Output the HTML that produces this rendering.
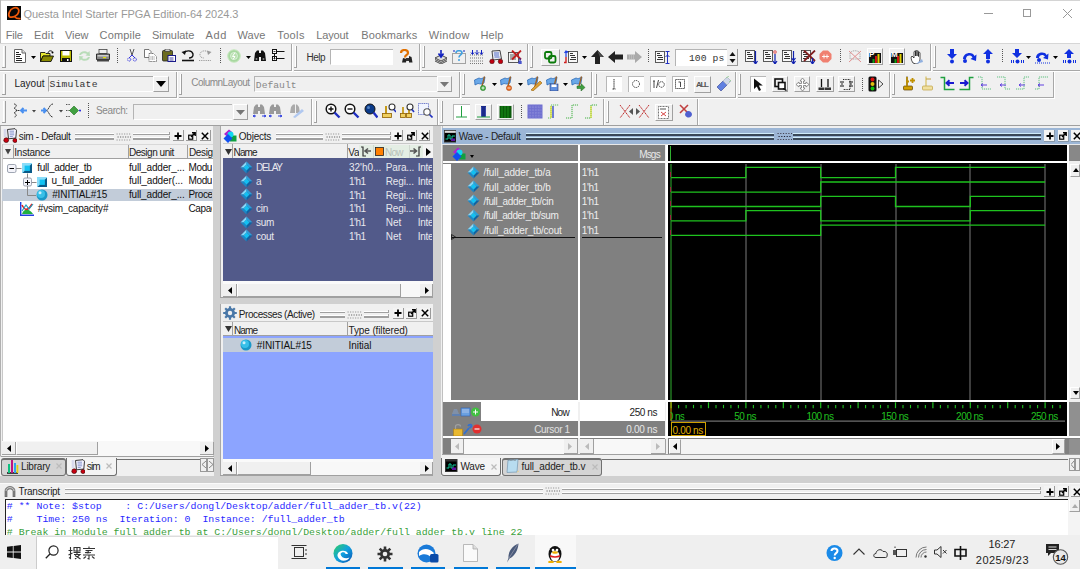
<!DOCTYPE html>
<html><head><meta charset="utf-8"><title>Questa</title>
<style>
html,body{margin:0;padding:0;width:1080px;height:569px;overflow:hidden;background:#f0f0f0;position:relative}
body>div,body>svg{position:absolute;box-sizing:border-box}
body{font-family:"Liberation Sans",sans-serif}
</style></head><body>
<div style="left:0.00px;top:0.00px;width:1080.00px;height:43.00px;background:#fff"></div>
<div style="left:0.00px;top:0.00px;width:1080.00px;height:1.00px;background:#d4d4d4"></div>
<svg style="left:7.00px;top:6.00px;" width="14" height="14" viewBox="0 0 14 14"><rect width="14" height="14" fill="#080808"/><path d="M2.6 10.8 C0.8 9 2.2 3.4 6.6 2 C10.6 0.9 12.6 3.2 11.6 6.2 C10.6 9.6 6 12 2.6 10.8Z" stroke="#f05a0a" stroke-width="1.8" fill="none"/><path d="M7.2 10.2 C8.8 12.2 11.2 13 13.6 12.6" stroke="#f05a0a" stroke-width="1.7" fill="none"/></svg>
<div style="left:23.55px;top:6.62px;height:14px;line-height:14px;font-family:'Liberation Sans',sans-serif;font-size:11px;letter-spacing:-0.052px;color:#999999;white-space:pre;">Questa Intel Starter FPGA Edition-64 2024.3</div>
<div style="left:984.00px;top:13.00px;width:9.00px;height:1.00px;background:#999"></div>
<div style="left:1023.00px;top:9.00px;width:8.00px;height:8.00px;border:1px solid #999;box-sizing:border-box"></div>
<svg style="left:1063.00px;top:9.00px;" width="9" height="9" viewBox="0 0 9 9"><path d="M0 0L9 9M9 0L0 9" stroke="#999" stroke-width="1"/></svg>
<div style="left:5.80px;top:28.27px;height:14px;line-height:14px;font-family:'Liberation Sans',sans-serif;font-size:11px;letter-spacing:-0.195px;color:#777777;white-space:pre;">File</div>
<div style="left:34.05px;top:28.27px;height:14px;line-height:14px;font-family:'Liberation Sans',sans-serif;font-size:11px;letter-spacing:0.144px;color:#777777;white-space:pre;">Edit</div>
<div style="left:65.05px;top:28.27px;height:14px;line-height:14px;font-family:'Liberation Sans',sans-serif;font-size:11px;letter-spacing:-0.085px;color:#777777;white-space:pre;">View</div>
<div style="left:99.55px;top:28.27px;height:14px;line-height:14px;font-family:'Liberation Sans',sans-serif;font-size:11px;letter-spacing:0.173px;color:#777777;white-space:pre;">Compile</div>
<div style="left:152.05px;top:28.27px;height:14px;line-height:14px;font-family:'Liberation Sans',sans-serif;font-size:11px;letter-spacing:-0.057px;color:#777777;white-space:pre;">Simulate</div>
<div style="left:205.55px;top:28.27px;height:14px;line-height:14px;font-family:'Liberation Sans',sans-serif;font-size:11px;letter-spacing:0.661px;color:#777777;white-space:pre;">Add</div>
<div style="left:237.55px;top:28.27px;height:14px;line-height:14px;font-family:'Liberation Sans',sans-serif;font-size:11px;letter-spacing:0.060px;color:#777777;white-space:pre;">Wave</div>
<div style="left:277.25px;top:28.27px;height:14px;line-height:14px;font-family:'Liberation Sans',sans-serif;font-size:11px;letter-spacing:0.378px;color:#777777;white-space:pre;">Tools</div>
<div style="left:316.25px;top:28.27px;height:14px;line-height:14px;font-family:'Liberation Sans',sans-serif;font-size:11px;letter-spacing:-0.166px;color:#777777;white-space:pre;">Layout</div>
<div style="left:361.25px;top:28.27px;height:14px;line-height:14px;font-family:'Liberation Sans',sans-serif;font-size:11px;letter-spacing:0.109px;color:#777777;white-space:pre;">Bookmarks</div>
<div style="left:428.85px;top:28.27px;height:14px;line-height:14px;font-family:'Liberation Sans',sans-serif;font-size:11px;letter-spacing:0.295px;color:#777777;white-space:pre;">Window</div>
<div style="left:480.55px;top:28.27px;height:14px;line-height:14px;font-family:'Liberation Sans',sans-serif;font-size:11px;letter-spacing:0.092px;color:#777777;white-space:pre;">Help</div>
<div style="left:0.00px;top:0.00px;width:1.00px;height:535.00px;background:#b8b8b8"></div>
<div style="left:0.00px;top:43.00px;width:1080.00px;height:83.00px;background:#f0f0f0"></div>
<div style="left:0.00px;top:43.00px;width:1080.00px;height:1.00px;background:#d6d6d6"></div>
<div style="left:290.50px;top:44.00px;width:1.50px;height:27.00px;background:#a8a8a8"></div>
<div style="left:292.00px;top:44.00px;width:1.00px;height:27.00px;background:#ffffff"></div>
<div style="left:0.00px;top:69.70px;width:292.00px;height:1.50px;background:#a8a8a8"></div>
<div style="left:0.00px;top:71.20px;width:293.00px;height:1.00px;background:#ffffff"></div>
<div style="left:3.30px;top:46.00px;width:1.20px;height:22.00px;background:#ffffff"></div>
<div style="left:4.50px;top:46.00px;width:1.30px;height:22.00px;background:#a0a0a0"></div>
<div style="left:2.30px;top:67.00px;width:3.50px;height:1.20px;background:#a0a0a0"></div>
<div style="left:418.50px;top:44.00px;width:1.50px;height:27.00px;background:#a8a8a8"></div>
<div style="left:420.00px;top:44.00px;width:1.00px;height:27.00px;background:#ffffff"></div>
<div style="left:294.00px;top:69.70px;width:126.00px;height:1.50px;background:#a8a8a8"></div>
<div style="left:294.00px;top:71.20px;width:127.00px;height:1.00px;background:#ffffff"></div>
<div style="left:294.80px;top:46.00px;width:1.20px;height:22.00px;background:#ffffff"></div>
<div style="left:296.00px;top:46.00px;width:1.30px;height:22.00px;background:#a0a0a0"></div>
<div style="left:293.80px;top:67.00px;width:3.50px;height:1.20px;background:#a0a0a0"></div>
<div style="left:526.50px;top:44.00px;width:1.50px;height:27.00px;background:#a8a8a8"></div>
<div style="left:528.00px;top:44.00px;width:1.00px;height:27.00px;background:#ffffff"></div>
<div style="left:422.00px;top:69.70px;width:106.00px;height:1.50px;background:#a8a8a8"></div>
<div style="left:422.00px;top:71.20px;width:107.00px;height:1.00px;background:#ffffff"></div>
<div style="left:422.80px;top:46.00px;width:1.20px;height:22.00px;background:#ffffff"></div>
<div style="left:424.00px;top:46.00px;width:1.30px;height:22.00px;background:#a0a0a0"></div>
<div style="left:421.80px;top:67.00px;width:3.50px;height:1.20px;background:#a0a0a0"></div>
<div style="left:929.50px;top:44.00px;width:1.50px;height:27.00px;background:#a8a8a8"></div>
<div style="left:931.00px;top:44.00px;width:1.00px;height:27.00px;background:#ffffff"></div>
<div style="left:530.00px;top:69.70px;width:401.00px;height:1.50px;background:#a8a8a8"></div>
<div style="left:530.00px;top:71.20px;width:402.00px;height:1.00px;background:#ffffff"></div>
<div style="left:530.80px;top:46.00px;width:1.20px;height:22.00px;background:#ffffff"></div>
<div style="left:532.00px;top:46.00px;width:1.30px;height:22.00px;background:#a0a0a0"></div>
<div style="left:529.80px;top:67.00px;width:3.50px;height:1.20px;background:#a0a0a0"></div>
<div style="left:1084.50px;top:44.00px;width:1.50px;height:27.00px;background:#a8a8a8"></div>
<div style="left:1086.00px;top:44.00px;width:1.00px;height:27.00px;background:#ffffff"></div>
<div style="left:933.00px;top:69.70px;width:153.00px;height:1.50px;background:#a8a8a8"></div>
<div style="left:933.00px;top:71.20px;width:154.00px;height:1.00px;background:#ffffff"></div>
<div style="left:933.80px;top:46.00px;width:1.20px;height:22.00px;background:#ffffff"></div>
<div style="left:935.00px;top:46.00px;width:1.30px;height:22.00px;background:#a0a0a0"></div>
<div style="left:932.80px;top:67.00px;width:3.50px;height:1.20px;background:#a0a0a0"></div>
<div style="left:175.50px;top:72.00px;width:1.50px;height:26.00px;background:#a8a8a8"></div>
<div style="left:177.00px;top:72.00px;width:1.00px;height:26.00px;background:#ffffff"></div>
<div style="left:0.00px;top:96.70px;width:177.00px;height:1.50px;background:#a8a8a8"></div>
<div style="left:0.00px;top:98.20px;width:178.00px;height:1.00px;background:#ffffff"></div>
<div style="left:3.30px;top:74.00px;width:1.20px;height:21.00px;background:#ffffff"></div>
<div style="left:4.50px;top:74.00px;width:1.30px;height:21.00px;background:#a0a0a0"></div>
<div style="left:2.30px;top:94.00px;width:3.50px;height:1.20px;background:#a0a0a0"></div>
<div style="left:458.50px;top:72.00px;width:1.50px;height:26.00px;background:#a8a8a8"></div>
<div style="left:460.00px;top:72.00px;width:1.00px;height:26.00px;background:#ffffff"></div>
<div style="left:179.00px;top:96.70px;width:281.00px;height:1.50px;background:#a8a8a8"></div>
<div style="left:179.00px;top:98.20px;width:282.00px;height:1.00px;background:#ffffff"></div>
<div style="left:179.80px;top:74.00px;width:1.20px;height:21.00px;background:#ffffff"></div>
<div style="left:181.00px;top:74.00px;width:1.30px;height:21.00px;background:#a0a0a0"></div>
<div style="left:178.80px;top:94.00px;width:3.50px;height:1.20px;background:#a0a0a0"></div>
<div style="left:590.50px;top:72.00px;width:1.50px;height:26.00px;background:#a8a8a8"></div>
<div style="left:592.00px;top:72.00px;width:1.00px;height:26.00px;background:#ffffff"></div>
<div style="left:462.00px;top:96.70px;width:130.00px;height:1.50px;background:#a8a8a8"></div>
<div style="left:462.00px;top:98.20px;width:131.00px;height:1.00px;background:#ffffff"></div>
<div style="left:462.80px;top:74.00px;width:1.20px;height:21.00px;background:#ffffff"></div>
<div style="left:464.00px;top:74.00px;width:1.30px;height:21.00px;background:#a0a0a0"></div>
<div style="left:461.80px;top:94.00px;width:3.50px;height:1.20px;background:#a0a0a0"></div>
<div style="left:734.50px;top:72.00px;width:1.50px;height:26.00px;background:#a8a8a8"></div>
<div style="left:736.00px;top:72.00px;width:1.00px;height:26.00px;background:#ffffff"></div>
<div style="left:594.00px;top:96.70px;width:142.00px;height:1.50px;background:#a8a8a8"></div>
<div style="left:594.00px;top:98.20px;width:143.00px;height:1.00px;background:#ffffff"></div>
<div style="left:594.80px;top:74.00px;width:1.20px;height:21.00px;background:#ffffff"></div>
<div style="left:596.00px;top:74.00px;width:1.30px;height:21.00px;background:#a0a0a0"></div>
<div style="left:593.80px;top:94.00px;width:3.50px;height:1.20px;background:#a0a0a0"></div>
<div style="left:888.50px;top:72.00px;width:1.50px;height:26.00px;background:#a8a8a8"></div>
<div style="left:890.00px;top:72.00px;width:1.00px;height:26.00px;background:#ffffff"></div>
<div style="left:738.00px;top:96.70px;width:152.00px;height:1.50px;background:#a8a8a8"></div>
<div style="left:738.00px;top:98.20px;width:153.00px;height:1.00px;background:#ffffff"></div>
<div style="left:738.80px;top:74.00px;width:1.20px;height:21.00px;background:#ffffff"></div>
<div style="left:740.00px;top:74.00px;width:1.30px;height:21.00px;background:#a0a0a0"></div>
<div style="left:737.80px;top:94.00px;width:3.50px;height:1.20px;background:#a0a0a0"></div>
<div style="left:1052.50px;top:72.00px;width:1.50px;height:26.00px;background:#a8a8a8"></div>
<div style="left:1054.00px;top:72.00px;width:1.00px;height:26.00px;background:#ffffff"></div>
<div style="left:892.00px;top:96.70px;width:162.00px;height:1.50px;background:#a8a8a8"></div>
<div style="left:892.00px;top:98.20px;width:163.00px;height:1.00px;background:#ffffff"></div>
<div style="left:892.80px;top:74.00px;width:1.20px;height:21.00px;background:#ffffff"></div>
<div style="left:894.00px;top:74.00px;width:1.30px;height:21.00px;background:#a0a0a0"></div>
<div style="left:891.80px;top:94.00px;width:3.50px;height:1.20px;background:#a0a0a0"></div>
<div style="left:310.50px;top:99.00px;width:1.50px;height:27.00px;background:#a8a8a8"></div>
<div style="left:312.00px;top:99.00px;width:1.00px;height:27.00px;background:#ffffff"></div>
<div style="left:0.00px;top:124.70px;width:312.00px;height:1.50px;background:#a8a8a8"></div>
<div style="left:0.00px;top:126.20px;width:313.00px;height:1.00px;background:#ffffff"></div>
<div style="left:3.30px;top:101.00px;width:1.20px;height:22.00px;background:#ffffff"></div>
<div style="left:4.50px;top:101.00px;width:1.30px;height:22.00px;background:#a0a0a0"></div>
<div style="left:2.30px;top:122.00px;width:3.50px;height:1.20px;background:#a0a0a0"></div>
<div style="left:436.50px;top:99.00px;width:1.50px;height:27.00px;background:#a8a8a8"></div>
<div style="left:438.00px;top:99.00px;width:1.00px;height:27.00px;background:#ffffff"></div>
<div style="left:314.00px;top:124.70px;width:124.00px;height:1.50px;background:#a8a8a8"></div>
<div style="left:314.00px;top:126.20px;width:125.00px;height:1.00px;background:#ffffff"></div>
<div style="left:314.80px;top:101.00px;width:1.20px;height:22.00px;background:#ffffff"></div>
<div style="left:316.00px;top:101.00px;width:1.30px;height:22.00px;background:#a0a0a0"></div>
<div style="left:313.80px;top:122.00px;width:3.50px;height:1.20px;background:#a0a0a0"></div>
<div style="left:602.50px;top:99.00px;width:1.50px;height:27.00px;background:#a8a8a8"></div>
<div style="left:604.00px;top:99.00px;width:1.00px;height:27.00px;background:#ffffff"></div>
<div style="left:440.00px;top:124.70px;width:164.00px;height:1.50px;background:#a8a8a8"></div>
<div style="left:440.00px;top:126.20px;width:165.00px;height:1.00px;background:#ffffff"></div>
<div style="left:440.80px;top:101.00px;width:1.20px;height:22.00px;background:#ffffff"></div>
<div style="left:442.00px;top:101.00px;width:1.30px;height:22.00px;background:#a0a0a0"></div>
<div style="left:439.80px;top:122.00px;width:3.50px;height:1.20px;background:#a0a0a0"></div>
<div style="left:696.50px;top:99.00px;width:1.50px;height:27.00px;background:#a8a8a8"></div>
<div style="left:698.00px;top:99.00px;width:1.00px;height:27.00px;background:#ffffff"></div>
<div style="left:606.00px;top:124.70px;width:92.00px;height:1.50px;background:#a8a8a8"></div>
<div style="left:606.00px;top:126.20px;width:93.00px;height:1.00px;background:#ffffff"></div>
<div style="left:606.80px;top:101.00px;width:1.20px;height:22.00px;background:#ffffff"></div>
<div style="left:608.00px;top:101.00px;width:1.30px;height:22.00px;background:#a0a0a0"></div>
<div style="left:605.80px;top:122.00px;width:3.50px;height:1.20px;background:#a0a0a0"></div>
<div style="left:0.00px;top:125.00px;width:1080.00px;height:1.00px;background:#a0a0a0"></div>
<svg style="left:14.00px;top:49.00px;" width="12" height="14" viewBox="0 0 12 14"><path d="M0.5 0.5H8L11.5 4V13.5H0.5Z" fill="#fff" stroke="#666"/><path d="M8 0.5V4H11.5" fill="#ddd" stroke="#666"/><rect x="2" y="3" width="3" height="1" fill="#222"/><rect x="2" y="5" width="5" height="1" fill="#222"/><rect x="2" y="7" width="4" height="1" fill="#222"/><rect x="2" y="9" width="6" height="1" fill="#222"/><rect x="2" y="11" width="6" height="1" fill="#222"/></svg>
<svg style="left:31.00px;top:56.00px;" width="5" height="3" viewBox="0 0 5 3"><path d="M0 0H5L2.5 3Z" fill="#000"/></svg>
<svg style="left:40.00px;top:50.00px;" width="14" height="12" viewBox="0 0 14 12"><path d="M0.5 2.5H5L6 3.5H10V6H3L0.5 11.5Z" fill="#e8e830" stroke="#000" stroke-width="0.8"/><path d="M3 6H13.5L11 11.5H0.5Z" fill="#8a8a00" stroke="#000" stroke-width="0.8"/><path d="M8 3 C8.5 0.5 11 0.2 12.5 1.8" stroke="#000" fill="none" stroke-width="0.9"/><circle cx="12.5" cy="2.5" r="1" fill="#000"/></svg>
<svg style="left:60.00px;top:50.00px;" width="12" height="12" viewBox="0 0 12 12"><rect x="0.5" y="0.5" width="11" height="11" fill="#b8b800" stroke="#111"/><rect x="2.5" y="1" width="7" height="4.5" fill="#fff"/><rect x="2" y="8" width="8" height="4" fill="#111"/><rect x="7" y="9" width="1.5" height="2" fill="#fff"/></svg>
<svg style="left:77.00px;top:49.00px;" width="15" height="14" viewBox="0 0 15 14"><path d="M2 6 C3 2 8 1 11 3.5 L12.5 2 L13 7 L8.5 6.5 L10 5 C8 3.5 5 4 4 6Z" fill="#b8dcb8"/><path d="M13 8 C12 12 7 13 4 10.5 L2.5 12 L2 7 L6.5 7.5 L5 9 C7 10.5 10 10 11 8Z" fill="#b8dcb8"/></svg>
<svg style="left:96.00px;top:49.00px;" width="14" height="13" viewBox="0 0 14 13"><rect x="3" y="0.5" width="8" height="4" fill="#eee" stroke="#444" stroke-width="0.8"/><path d="M0.5 5H13.5V10.5H0.5Z" fill="#888" stroke="#222" stroke-width="0.9"/><rect x="1.5" y="6" width="11" height="1.5" fill="#ccc"/><rect x="7" y="8" width="3" height="1.2" fill="#dd0"/><rect x="1" y="10.5" width="12" height="2" fill="#444"/></svg>
<svg style="left:117.00px;top:48.00px;" width="1" height="15" viewBox="0 0 1 15"><line x1="0.5" y1="0" x2="0.5" y2="15" stroke="#555" stroke-dasharray="1 1"/></svg>
<svg style="left:127.00px;top:49.00px;" width="10" height="13" viewBox="0 0 10 13"><path d="M3 0L5 6L7 0" stroke="#444" fill="none" stroke-width="0.9"/><path d="M5 6 L2 9 M5 6 L8 9" stroke="#3333dd" stroke-width="1"/><circle cx="2.2" cy="10.5" r="1.6" fill="none" stroke="#3333dd" stroke-dasharray="1 0.6"/><circle cx="7.8" cy="10.5" r="1.6" fill="none" stroke="#3333dd" stroke-dasharray="1 0.6"/></svg>
<svg style="left:144.00px;top:49.00px;" width="13" height="13" viewBox="0 0 13 13"><path d="M0.5 0.5H5L7 2.5V8.5H0.5Z" fill="#fff" stroke="#555" stroke-width="0.8"/><path d="M5 4.5H9.5L12.5 7.5V12.5H5Z" fill="#fff" stroke="#555" stroke-width="0.8" stroke-dasharray="1 0.5"/><path d="M6.5 8h4M6.5 10h4" stroke="#555" stroke-width="0.8" stroke-dasharray="1 0.6"/></svg>
<svg style="left:162.00px;top:49.00px;" width="14" height="13" viewBox="0 0 14 13"><rect x="0.5" y="1.5" width="10" height="10.5" rx="1" fill="#6b6b20" stroke="#222" stroke-width="0.8"/><rect x="3" y="0" width="5" height="2.5" fill="#ccc" stroke="#222" stroke-width="0.6"/><rect x="6" y="6.5" width="7.5" height="6" fill="#fff" stroke="#1a1a8a" stroke-width="1"/><path d="M7.5 9h4M7.5 11h4" stroke="#1a1a8a" stroke-width="0.8"/></svg>
<svg style="left:181.00px;top:49.00px;" width="14" height="13" viewBox="0 0 14 13"><path d="M3 4 C5 1 11 1 12 5 C12.5 8 10 9 8 9" stroke="#111" stroke-width="1.4" fill="none"/><path d="M0.5 3L5 1.5L4 6Z" fill="#111"/><path d="M1 11.5H13" stroke="#111" stroke-width="1.6"/></svg>
<svg style="left:198.00px;top:49.00px;" width="14" height="13" viewBox="0 0 14 13"><path d="M11 4 C9 1 3 1 2 5 C1.5 8 4 9 6 9" stroke="#999" stroke-width="1" stroke-dasharray="1 0.8" fill="none"/><path d="M13.5 3L9 1.5L10 6Z" fill="#999"/><path d="M1 11.5H13" stroke="#999" stroke-width="1" stroke-dasharray="1 0.8"/></svg>
<svg style="left:220.00px;top:48.00px;" width="1" height="15" viewBox="0 0 1 15"><line x1="0.5" y1="0" x2="0.5" y2="15" stroke="#555" stroke-dasharray="1 1"/></svg>
<svg style="left:227.00px;top:49.00px;" width="14" height="14" viewBox="0 0 14 14"><circle cx="7" cy="7" r="6.3" fill="#a8d8a0" stroke="#c8e8c0"/><circle cx="7" cy="7" r="3.5" fill="#b8e0b0" stroke="#fff" stroke-width="0.5"/><path d="M8 3.5L5.5 7.5H8L6 10.5" stroke="#fff" stroke-width="1" fill="none"/></svg>
<svg style="left:246.00px;top:56.00px;" width="5" height="3" viewBox="0 0 5 3"><path d="M0 0H5L2.5 3Z" fill="#000"/></svg>
<svg style="left:253.00px;top:49.00px;" width="14" height="13" viewBox="0 0 14 13"><path d="M1 12 L2 4 L4 1.5 H6 V12Z M13 12 L12 4 L10 1.5 H8 V12Z" fill="#111"/><rect x="5.5" y="4" width="3" height="4" fill="#111"/><circle cx="3.5" cy="10" r="1" fill="#888"/><circle cx="10.5" cy="10" r="1" fill="#888"/></svg>
<svg style="left:272.00px;top:49.00px;" width="13" height="13" viewBox="0 0 13 13"><rect x="0.5" y="0.5" width="4" height="4" fill="#fff" stroke="#111"/><rect x="0.5" y="7.5" width="4" height="4" fill="#fff" stroke="#111"/><path d="M2.5 4.5V9.5M4.5 2.5H12.5M4.5 9.5H12.5" stroke="#111" stroke-width="1"/><path d="M1.5 2.5h2M1.5 9.5h2M2.5 8.5v2" stroke="#111" stroke-width="0.8"/></svg>
<div style="left:306.55px;top:51.07px;height:13px;line-height:13px;font-family:'Liberation Sans',sans-serif;font-size:10px;letter-spacing:-0.526px;color:#333;white-space:pre;">Help</div>
<div style="left:330.00px;top:48.70px;width:63.00px;height:16.00px;background:#fff;border-top:1px solid #b4b4b4;border-left:1px solid #b4b4b4;border-bottom:1px solid #fff;box-sizing:border-box"></div>
<svg style="left:399.00px;top:49.00px;" width="14" height="14" viewBox="0 0 14 14"><path d="M2 4 C2 0 9 0 9 4 C9 6 6 6 6 8.5" stroke="#e07000" stroke-width="2.2" fill="none"/><circle cx="6" cy="11" r="1.2" fill="#e07000"/><path d="M4 9 L3 13.5 H7 L7.5 10Z M13.5 13.5 L12.5 8 L10 7 V13.5Z" fill="#222"/><rect x="7" y="9" width="3" height="3" fill="#333"/></svg>
<svg style="left:434.00px;top:50.00px;" width="14" height="14" viewBox="0 0 14 14"><path d="M1 8 L7 5 L13 8 L7 11Z" fill="#ddd" stroke="#222" stroke-width="0.8"/><path d="M1 9.5 L7 12.5 L13 9.5 M1 11 L7 14 L13 11" stroke="#222" stroke-width="0.8" fill="none"/><path d="M7 0V6M4.5 3.5L7 7L9.5 3.5" stroke="#1020c0" stroke-width="1.6" fill="none"/></svg>
<svg style="left:452.00px;top:50.00px;" width="14" height="14" viewBox="0 0 14 14"><rect x="0.5" y="3.5" width="13" height="10" fill="none" stroke="#555" stroke-dasharray="1 1"/><path d="M4 3 C4 0 10 0 10 3 C10 5 7 5 7 7.5" stroke="#40a0e0" stroke-width="1.6" fill="none"/><circle cx="7" cy="10" r="1" fill="#40a0e0"/><path d="M1 1h2M11 1h2" stroke="#1020c0"/></svg>
<svg style="left:470.00px;top:50.00px;" width="14" height="14" viewBox="0 0 14 14"><path d="M0 5h14M0 8h14M0 11h14M0 13.5h14" stroke="#777" stroke-dasharray="1 1"/><path d="M2.5 0V4M1 2.5L2.5 4.5L4 2.5M7 0V4M5.5 2.5L7 4.5L8.5 2.5M11.5 0V4M10 2.5L11.5 4.5L13 2.5" stroke="#1020c0" fill="none"/></svg>
<svg style="left:489.00px;top:50.00px;" width="14" height="14" viewBox="0 0 14 14"><path d="M3 1 L11 0.5 L12.5 9 L4 10Z" fill="#e8e8f0" stroke="#333" stroke-width="0.9"/><path d="M5 3h5M5 5h5M5.5 7h5" stroke="#3050c0" stroke-width="0.8"/><circle cx="3" cy="11.5" r="2.3" fill="#c00010" stroke="#300" stroke-width="0.5"/><circle cx="11.5" cy="11.5" r="2.3" fill="#c00010" stroke="#300" stroke-width="0.5"/></svg>
<svg style="left:508.00px;top:50.00px;" width="15" height="14" viewBox="0 0 15 14"><rect x="0.5" y="2.5" width="10" height="10" fill="#f4f4f4" stroke="#333" stroke-width="0.8"/><path d="M2 5h6M2 7h6M2 9h6" stroke="#333" stroke-width="0.8"/><path d="M4 0.5L13 9.5M13 0.5L4 9.5" stroke="#c02020" stroke-width="1.8"/><path d="M12 8V14M10 12h4M10 14h4" stroke="#1020c0"/></svg>
<div style="left:541.00px;top:49.00px;width:19.00px;height:17.00px;background:#f0f0f0;border-right:1px solid #a0a0a0;border-bottom:1px solid #a0a0a0;border-left:1px solid #fff;border-top:1px solid #fff;box-sizing:border-box"></div>
<svg style="left:544.00px;top:51.00px;" width="13" height="13" viewBox="0 0 13 13"><rect x="1" y="1" width="6.5" height="6.5" rx="1.5" fill="none" stroke="#0a7a0a" stroke-width="1.8"/><rect x="5" y="5" width="6.5" height="6.5" rx="1.5" fill="none" stroke="#0a7a0a" stroke-width="1.8"/></svg>
<svg style="left:563.00px;top:50.00px;" width="15" height="14" viewBox="0 0 15 14"><rect x="5.5" y="1.5" width="9" height="11" fill="#f8f8f8" stroke="#333" stroke-width="0.8"/><rect x="7" y="3" width="3" height="1" fill="#333"/><rect x="7" y="5" width="5" height="1" fill="#333"/><rect x="8" y="7" width="5" height="1" fill="#333"/><rect x="7" y="9" width="6" height="1" fill="#333"/><path d="M3 7 V1.5 H5M1.5 3L3 1L4.5 3" stroke="#2040e0" stroke-width="1.2" fill="none"/><path d="M3 7V12.5H1" stroke="#d02020" stroke-width="1.4" fill="none"/></svg>
<svg style="left:582.00px;top:56.00px;" width="5" height="3" viewBox="0 0 5 3"><path d="M0 0H5L2.5 3Z" fill="#000"/></svg>
<svg style="left:591.00px;top:50.00px;" width="13" height="14" viewBox="0 0 13 14"><path d="M6.5 0L13 7H9V14H4V7H0Z" fill="#222"/><path d="M6.5 1L12 7H9" fill="#555"/></svg>
<svg style="left:608.00px;top:51.00px;" width="16" height="12" viewBox="0 0 16 12"><path d="M0 6L7 0V3.5H15V8.5H7V12Z" fill="#222"/></svg>
<svg style="left:627.00px;top:51.00px;" width="15" height="12" viewBox="0 0 15 12"><path d="M15 6L8 0V3.5H0V8.5H8V12Z" fill="#aaa"/><path d="M2 5h6M2 7h6" stroke="#ccc" stroke-dasharray="1 1"/></svg>
<svg style="left:648.00px;top:49.00px;" width="1" height="14" viewBox="0 0 1 14"><line x1="0.5" y1="0" x2="0.5" y2="14" stroke="#555" stroke-dasharray="1 1"/></svg>
<svg style="left:655.00px;top:50.00px;" width="15" height="14" viewBox="0 0 15 14"><rect x="0.5" y="1.5" width="9" height="11" fill="#f8f8f8" stroke="#333" stroke-width="0.8"/><rect x="2" y="3" width="3" height="1" fill="#333"/><rect x="2" y="5" width="5" height="1" fill="#333"/><rect x="3" y="7" width="5" height="1" fill="#333"/><rect x="2" y="9" width="6" height="1" fill="#333"/><path d="M12.5 1V13.5M10.5 1.5h4M10.5 13.5h4M10.5 7L12.5 5L14.5 7" stroke="#2030c0" fill="none"/></svg>
<div style="left:675.00px;top:49.00px;width:52.00px;height:17.00px;background:#fff;border-top:1px solid #b4b4b4;border-left:1px solid #b4b4b4;box-sizing:border-box"></div>
<div style="left:688.95px;top:51.71px;height:13px;line-height:13px;font-family:'Liberation Mono',sans-serif;font-size:9.7px;letter-spacing:0.102px;color:#333;white-space:pre;">100 ps</div>
<div style="left:727.00px;top:49.00px;width:11.00px;height:17.00px;background:#f0f0f0;border-right:1px solid #999;border-bottom:1px solid #999;box-sizing:border-box"></div>
<svg style="left:728.00px;top:51.00px;" width="9" height="13" viewBox="0 0 9 13"><path d="M1.5 5L4.5 1L7.5 5Z M1.5 8L4.5 12L7.5 8Z" fill="#111"/></svg>
<svg style="left:745.00px;top:49.00px;" width="14" height="14" viewBox="0 0 14 14"><rect x="0.5" y="1.5" width="9" height="11" fill="#f8f8f8" stroke="#333" stroke-width="0.8"/><rect x="2" y="3" width="3" height="1" fill="#333"/><rect x="2" y="5" width="5" height="1" fill="#333"/><rect x="3" y="7" width="5" height="1" fill="#333"/><rect x="2" y="9" width="6" height="1" fill="#333"/></svg>
<svg style="left:763.00px;top:49.00px;" width="14" height="14" viewBox="0 0 14 14"><rect x="0.5" y="1.5" width="9" height="11" fill="#f8f8f8" stroke="#333" stroke-width="0.8"/><rect x="2" y="3" width="3" height="1" fill="#333"/><rect x="2" y="5" width="5" height="1" fill="#333"/><rect x="3" y="7" width="5" height="1" fill="#333"/><rect x="2" y="9" width="6" height="1" fill="#333"/></svg>
<svg style="left:782.00px;top:49.00px;" width="14" height="14" viewBox="0 0 14 14"><rect x="0.5" y="1.5" width="9" height="11" fill="#f8f8f8" stroke="#333" stroke-width="0.8"/><rect x="2" y="3" width="3" height="1" fill="#333"/><rect x="2" y="5" width="5" height="1" fill="#333"/><rect x="3" y="7" width="5" height="1" fill="#333"/><rect x="2" y="9" width="6" height="1" fill="#333"/></svg>
<svg style="left:801.00px;top:49.00px;" width="14" height="14" viewBox="0 0 14 14"><rect x="0.5" y="1.5" width="9" height="11" fill="#f8f8f8" stroke="#333" stroke-width="0.8"/><rect x="2" y="3" width="3" height="1" fill="#333"/><rect x="2" y="5" width="5" height="1" fill="#333"/><rect x="3" y="7" width="5" height="1" fill="#333"/><rect x="2" y="9" width="6" height="1" fill="#333"/></svg>
<svg style="left:753.00px;top:50.00px;" width="6" height="14" viewBox="0 0 6 14"><path d="M2.5 1V13M0.5 11L2.5 14L4.5 11" stroke="#1020b0" stroke-width="1.2" fill="none"/></svg>
<svg style="left:772.00px;top:50.00px;" width="6" height="14" viewBox="0 0 6 14"><circle cx="3" cy="2" r="1.5" fill="#f4a0a0" stroke="#d04040" stroke-width="0.5"/><path d="M3 4V13M1 11L3 14L5 11" stroke="#1020b0" stroke-width="1.2" fill="none"/></svg>
<svg style="left:790.00px;top:50.00px;" width="7" height="14" viewBox="0 0 7 14"><path d="M3.5 1V13M1.5 8L3.5 10.5L5.5 8M1.5 11L3.5 14L5.5 11" stroke="#1020b0" stroke-width="1.2" fill="none"/></svg>
<svg style="left:803.00px;top:50.00px;" width="13" height="14" viewBox="0 0 13 14"><path d="M1 0.5L12 11M12 0.5L1 11" stroke="#802020" stroke-width="1.8"/><path d="M9.5 8V13M7.5 11L9.5 14L11.5 11" stroke="#1020b0" stroke-width="1.2" fill="none"/></svg>
<svg style="left:819.00px;top:50.00px;" width="13" height="13" viewBox="0 0 13 13"><path d="M4 0.5H9L12.5 4V9L9 12.5H4L0.5 9V4Z" fill="#f08070"/><path d="M3 6.5h7M5 4.5v4M8 4.5v4" stroke="#fff" stroke-width="0.9"/></svg>
<svg style="left:840.00px;top:49.00px;" width="1" height="14" viewBox="0 0 1 14"><line x1="0.5" y1="0" x2="0.5" y2="14" stroke="#555" stroke-dasharray="1 1"/></svg>
<svg style="left:848.00px;top:50.00px;" width="14" height="13" viewBox="0 0 14 13"><path d="M2 3 C4 0 10 0 12 3 V9 H2Z" fill="none" stroke="#999" stroke-width="0.9" stroke-dasharray="1 0.8"/><path d="M1 1L13 12M13 1L1 12" stroke="#e09090" stroke-width="1"/></svg>
<div style="left:867.00px;top:48.00px;width:16.00px;height:17.00px;background:#f0f0f0;border-right:1px solid #a0a0a0;border-bottom:1px solid #a0a0a0;border-left:1px solid #fff;border-top:1px solid #fff;box-sizing:border-box"></div>
<svg style="left:869.00px;top:50.00px;" width="13" height="13" viewBox="0 0 13 13"><rect x="0" y="3" width="12" height="10" fill="#111"/><rect x="6" y="6" width="2" height="7" fill="#d01010"/><rect x="8.5" y="4" width="2" height="9" fill="#e0d000"/><rect x="3.5" y="9" width="2" height="4" fill="#10a010"/><text x="0" y="7" font-family="Liberation Sans" font-weight="bold" font-size="8" fill="#fff">P</text></svg>
<div style="left:889.00px;top:48.00px;width:16.00px;height:17.00px;background:#f0f0f0;border-right:1px solid #a0a0a0;border-bottom:1px solid #a0a0a0;border-left:1px solid #fff;border-top:1px solid #fff;box-sizing:border-box"></div>
<svg style="left:891.00px;top:50.00px;" width="13" height="13" viewBox="0 0 13 13"><rect x="0" y="3" width="12" height="10" fill="#111"/><rect x="6" y="6" width="2" height="7" fill="#d01010"/><rect x="8.5" y="4" width="2" height="9" fill="#e0d000"/><rect x="3.5" y="9" width="2" height="4" fill="#10a010"/><text x="0" y="7" font-family="Liberation Sans" font-weight="bold" font-size="8" fill="#fff">M</text></svg>
<svg style="left:910.00px;top:50.00px;" width="14" height="14" viewBox="0 0 14 14"><path d="M3 13 C1 10 0.5 7 2 6 L4 8 V2 C4 1 5.5 1 5.5 2 V6 V1 C5.5 0 7 0 7 1 V6 V1.5 C7 0.5 8.5 0.5 8.5 1.5 V6.5 V3 C8.5 2 10 2 10 3 V9 C10 12 8 14 6 14Z" fill="#fff" stroke="#222" stroke-width="0.8"/><path d="M6 14 L12 9 L13 12 Z" fill="#90b0e0"/></svg>
<svg style="left:947.00px;top:49.00px;" width="10" height="15" viewBox="0 0 10 15"><path d="M3 0H7V5H10L5 10L0 5H3Z" fill="#1030e0"/><circle cx="5" cy="12.5" r="2" fill="#1030e0"/></svg>
<svg style="left:962.00px;top:50.00px;" width="15" height="13" viewBox="0 0 15 13"><path d="M1 9 C1 2 11 1 12.5 6 L14.5 4.5 L14 11 L8.5 9 L10.5 7.5 C9 4.5 4 5 4 9Z" fill="#1030e0"/><circle cx="3" cy="11" r="2" fill="#1030e0"/></svg>
<svg style="left:983.00px;top:49.00px;" width="10" height="15" viewBox="0 0 10 15"><path d="M3 10H7V5H10L5 0L0 5H3Z" fill="#1030e0"/><circle cx="5" cy="12.5" r="2" fill="#1030e0"/></svg>
<svg style="left:1002.00px;top:49.00px;" width="1" height="14" viewBox="0 0 1 14"><line x1="0.5" y1="0" x2="0.5" y2="14" stroke="#555" stroke-dasharray="1 1"/></svg>
<svg style="left:1011.00px;top:49.00px;" width="13" height="15" viewBox="0 0 13 15"><path d="M4 0H8V4H11L6 9L1 4H4Z" fill="#1030e0"/><circle cx="6.5" cy="12.5" r="2" fill="#1030e0"/><path d="M0.5 11v3M2.5 11v3M10.5 11v3M12.5 11v3" stroke="#1030e0"/></svg>
<svg style="left:1026.00px;top:56.00px;" width="5" height="3" viewBox="0 0 5 3"><path d="M0 0H5L2.5 3Z" fill="#000"/></svg>
<svg style="left:1035.00px;top:50.00px;" width="15" height="14" viewBox="0 0 15 14"><path d="M1 8 C1 2 10 1 11.5 5 L13.5 3.5 L13 9.5 L8 8 L10 6.5 C8.5 4 4 4.5 4 8Z" fill="#1030e0"/><circle cx="4" cy="10" r="2" fill="#1030e0"/><path d="M0 13h15" stroke="#1030e0" stroke-dasharray="1 1"/></svg>
<svg style="left:1053.00px;top:56.00px;" width="5" height="3" viewBox="0 0 5 3"><path d="M0 0H5L2.5 3Z" fill="#000"/></svg>
<svg style="left:1063.00px;top:49.00px;" width="13" height="15" viewBox="0 0 13 15"><path d="M4 9H8V5H11L6 0L1 5H4Z" fill="#1030e0"/><circle cx="6.5" cy="12.5" r="2" fill="#1030e0"/><path d="M0.5 11v3M2.5 11v3M10.5 11v3M12.5 11v3" stroke="#1030e0"/></svg>
<div style="left:14.55px;top:76.52px;height:13px;line-height:13px;font-family:'Liberation Sans',sans-serif;font-size:10px;letter-spacing:-0.026px;color:#222;white-space:pre;">Layout</div>
<div style="left:48.00px;top:76.00px;width:121.00px;height:16.00px;background:#f0f0f0;border-top:1px solid #a8a8a8;border-left:1px solid #a8a8a8;border-bottom:1px solid #fff;box-sizing:border-box"></div>
<div style="left:49.55px;top:78.31px;height:13px;line-height:13px;font-family:'Liberation Mono',sans-serif;font-size:9.7px;letter-spacing:0.198px;color:#333;white-space:pre;">Simulate</div>
<div style="left:153.00px;top:76.00px;width:16.00px;height:16.00px;background:#f0f0f0;border-top:1px solid #fff;border-left:1px solid #fff;border-right:1px solid #a0a0a0;border-bottom:1px solid #a0a0a0;box-sizing:border-box"></div>
<svg style="left:156.00px;top:81.00px;" width="10" height="6" viewBox="0 0 10 6"><path d="M0 0H10L5 6Z" fill="#000"/></svg>
<div style="left:191.25px;top:76.47px;height:13px;line-height:13px;font-family:'Liberation Sans',sans-serif;font-size:10px;letter-spacing:-0.517px;color:#888;white-space:pre;">ColumnLayout</div>
<div style="left:254.00px;top:76.00px;width:183.00px;height:16.00px;background:#f0f0f0;border-top:1px solid #b4b4b4;border-left:1px solid #b4b4b4;border-bottom:1px solid #fff;box-sizing:border-box"></div>
<div style="left:255.85px;top:78.61px;height:13px;line-height:13px;font-family:'Liberation Mono',sans-serif;font-size:9.7px;letter-spacing:0.000px;color:#888;white-space:pre;">Default</div>
<div style="left:437.00px;top:76.00px;width:15.00px;height:16.00px;background:#f0f0f0;border-top:1px solid #fff;border-left:1px solid #fff;border-right:1px solid #a0a0a0;border-bottom:1px solid #a0a0a0;box-sizing:border-box"></div>
<svg style="left:440.00px;top:82.00px;" width="9" height="5" viewBox="0 0 9 5"><path d="M0 0H9L4.5 5Z" fill="#777"/></svg>
<svg style="left:474.00px;top:76.00px;" width="15" height="15" viewBox="0 0 15 15"><path d="M0.5 4 L5 2 C7 3 8 2.5 11 1 L10 7 C8 8.5 6 8 4 7.5 L1 9Z" fill="#6aa8e8" stroke="#2060b0" stroke-width="0.7"/><path d="M10.5 0.5 L7.5 12" stroke="#a06020" stroke-width="1.3"/><circle cx="9" cy="12" r="2.6" fill="#40b040" stroke="#207020" stroke-width="0.5"/><path d="M7.5 12h3M9 10.5v3" stroke="#fff" stroke-width="0.8"/></svg>
<svg style="left:492.00px;top:83.00px;" width="5" height="3" viewBox="0 0 5 3"><path d="M0 0H5L2.5 3Z" fill="#000"/></svg>
<svg style="left:500.00px;top:76.00px;" width="15" height="15" viewBox="0 0 15 15"><path d="M0.5 4 L5 2 C7 3 8 2.5 11 1 L10 7 C8 8.5 6 8 4 7.5 L1 9Z" fill="#6aa8e8" stroke="#2060b0" stroke-width="0.7"/><path d="M10.5 0.5 L7.5 12" stroke="#a06020" stroke-width="1.3"/><circle cx="9" cy="12" r="2.6" fill="#f07020" stroke="#a04010" stroke-width="0.5"/><path d="M7.5 12h3" stroke="#fff" stroke-width="0.8"/></svg>
<svg style="left:518.00px;top:83.00px;" width="5" height="3" viewBox="0 0 5 3"><path d="M0 0H5L2.5 3Z" fill="#000"/></svg>
<svg style="left:527.00px;top:76.00px;" width="15" height="15" viewBox="0 0 15 15"><path d="M0.5 4 L5 2 C7 3 8 2.5 11 1 L10 7 C8 8.5 6 8 4 7.5 L1 9Z" fill="#6aa8e8" stroke="#2060b0" stroke-width="0.7"/><path d="M10.5 0.5 L7.5 12" stroke="#a06020" stroke-width="1.3"/><path d="M4 14 L13 5 L15 7 L6 15Z" fill="#e0a030" stroke="#906010" stroke-width="0.6"/></svg>
<svg style="left:546.00px;top:76.00px;" width="15" height="15" viewBox="0 0 15 15"><path d="M0.5 4 L5 2 C7 3 8 2.5 11 1 L10 7 C8 8.5 6 8 4 7.5 L1 9Z" fill="#6aa8e8" stroke="#2060b0" stroke-width="0.7"/><path d="M10.5 0.5 L7.5 12" stroke="#a06020" stroke-width="1.3"/><rect x="4" y="8" width="8" height="7" fill="#6090e0" stroke="#203070" stroke-width="0.6"/><rect x="5.5" y="8.5" width="5" height="2.5" fill="#fff"/></svg>
<svg style="left:563.00px;top:83.00px;" width="5" height="3" viewBox="0 0 5 3"><path d="M0 0H5L2.5 3Z" fill="#000"/></svg>
<svg style="left:571.00px;top:76.00px;" width="15" height="15" viewBox="0 0 15 15"><path d="M0.5 4 L5 2 C7 3 8 2.5 11 1 L10 7 C8 8.5 6 8 4 7.5 L1 9Z" fill="#6aa8e8" stroke="#2060b0" stroke-width="0.7"/><path d="M10.5 0.5 L7.5 12" stroke="#a06020" stroke-width="1.3"/><path d="M6 10h4V7.5L14 11.5L10 15V12.5H6Z" fill="#40a040" stroke="#206020" stroke-width="0.5"/></svg>
<div style="left:606.00px;top:76.00px;width:16.00px;height:16.00px;background:#fff;border-top:1px solid #b8b8b8;border-left:1px solid #b8b8b8;box-sizing:border-box"></div>
<svg style="left:608.00px;top:78.00px;" width="12" height="12" viewBox="0 0 12 12"><path d="M6 1V11M4.5 11H7.5M6 1" stroke="#333" stroke-width="1" stroke-dasharray="1.5 0.6"/></svg>
<div style="left:628.00px;top:76.00px;width:16.00px;height:16.00px;background:#fff;border-top:1px solid #b8b8b8;border-left:1px solid #b8b8b8;box-sizing:border-box"></div>
<svg style="left:630.00px;top:78.00px;" width="12" height="12" viewBox="0 0 12 12"><circle cx="6" cy="6" r="3.5" fill="none" stroke="#333" stroke-dasharray="1.2 0.8"/></svg>
<div style="left:650.00px;top:76.00px;width:16.00px;height:16.00px;background:#fff;border-top:1px solid #b8b8b8;border-left:1px solid #b8b8b8;box-sizing:border-box"></div>
<svg style="left:652.00px;top:78.00px;" width="13" height="12" viewBox="0 0 13 12"><path d="M2 3V10M1 3H3M6.5 2L4.5 10" stroke="#333" stroke-width="0.9"/><circle cx="9.5" cy="6.5" r="2.8" fill="none" stroke="#333" stroke-dasharray="1.2 0.7"/></svg>
<div style="left:672.00px;top:76.00px;width:16.00px;height:16.00px;background:#fff;border-top:1px solid #b8b8b8;border-left:1px solid #b8b8b8;box-sizing:border-box"></div>
<svg style="left:674.00px;top:78.00px;" width="12" height="12" viewBox="0 0 12 12"><rect x="1.5" y="1.5" width="9" height="9" fill="none" stroke="#333" stroke-dasharray="1.2 0.8"/><path d="M4.5 4H6.5V9" stroke="#333" stroke-width="0.9" fill="none"/></svg>
<div style="left:694.00px;top:76.00px;width:17.00px;height:17.00px;background:#f0f0f0;border-top:1px solid #fff;border-left:1px solid #fff;border-right:1px solid #a0a0a0;border-bottom:1px solid #a0a0a0;box-sizing:border-box"></div>
<div style="left:696.05px;top:80.08px;height:10px;line-height:10px;font-family:'Liberation Sans',sans-serif;font-size:8px;letter-spacing:-1.331px;color:#555;white-space:pre;font-weight:bold;">ALL</div>
<svg style="left:716.00px;top:76.00px;" width="15" height="15" viewBox="0 0 15 15"><path d="M1 11 L7 5 L11 9 L5 15Z" fill="#6080e0" stroke="#304090" stroke-width="0.6"/><path d="M7 5 L11 1 L15 5 L11 9Z" fill="#d0d8e8" stroke="#a0a8c0" stroke-width="0.6"/><path d="M10 2L13 0M13 6L15 4" stroke="#a0d0a0"/></svg>
<div style="left:750.00px;top:76.00px;width:16.00px;height:16.00px;background:#fff;border-top:1px solid #b8b8b8;border-left:1px solid #b8b8b8;box-sizing:border-box"></div>
<svg style="left:753.00px;top:78.00px;" width="11" height="13" viewBox="0 0 11 13"><path d="M1 0.5V11L3.8 8.5L6 13L8 12L5.8 7.6H9.8Z" fill="#111"/></svg>
<div style="left:772.00px;top:76.00px;width:16.00px;height:16.00px;background:#f0f0f0;border-top:1px solid #fff;border-left:1px solid #fff;border-right:1px solid #a0a0a0;border-bottom:1px solid #a0a0a0;box-sizing:border-box"></div>
<svg style="left:774.00px;top:78.00px;" width="13" height="13" viewBox="0 0 13 13"><rect x="1" y="1" width="7.5" height="7.5" fill="none" stroke="#111" stroke-width="1.6"/><rect x="4.5" y="4.5" width="6.5" height="6.5" fill="#fff" stroke="#111" stroke-width="1.6"/><path d="M9 10.5L12.5 12.5" stroke="#111" stroke-width="1.4"/></svg>
<div style="left:794.00px;top:76.00px;width:16.00px;height:16.00px;background:#f0f0f0;border-top:1px solid #fff;border-left:1px solid #fff;border-right:1px solid #a0a0a0;border-bottom:1px solid #a0a0a0;box-sizing:border-box"></div>
<svg style="left:796.00px;top:78.00px;" width="13" height="13" viewBox="0 0 13 13"><path d="M6.5 0L9 3H7.5V5.5H10V4L13 6.5L10 9V7.5H7.5V10H9L6.5 13L4 10H5.5V7.5H3V9L0 6.5L3 4V5.5H5.5V3H4Z" fill="#fff" stroke="#777" stroke-width="0.8"/></svg>
<div style="left:816.00px;top:76.00px;width:18.00px;height:16.00px;background:#f0f0f0;border-top:1px solid #fff;border-left:1px solid #fff;border-right:1px solid #a0a0a0;border-bottom:1px solid #a0a0a0;box-sizing:border-box"></div>
<svg style="left:818.00px;top:78.00px;" width="14" height="13" viewBox="0 0 14 13"><path d="M3.5 1V9M10 1V9" stroke="#111" stroke-width="1.3"/><path d="M0.5 9.5H6.5V12H0.5Z M7 9.5H13V12H7Z" fill="#333"/></svg>
<div style="left:838.00px;top:76.00px;width:17.00px;height:16.00px;background:#f0f0f0;border-top:1px solid #fff;border-left:1px solid #fff;border-right:1px solid #a0a0a0;border-bottom:1px solid #a0a0a0;box-sizing:border-box"></div>
<svg style="left:840.00px;top:79.00px;" width="13" height="11" viewBox="0 0 13 11"><path d="M3 0.5H10V10.5H3" fill="none" stroke="#111" stroke-width="0.9" stroke-dasharray="1 0.7"/><path d="M0 3h4M0 7h4M9 3h4M9 7h4" stroke="#111"/><circle cx="2" cy="5" r="0.8" fill="#111"/><circle cx="11" cy="5" r="0.8" fill="#111"/></svg>
<svg style="left:862.00px;top:78.00px;" width="1" height="14" viewBox="0 0 1 14"><line x1="0.5" y1="0" x2="0.5" y2="14" stroke="#555" stroke-dasharray="1 1"/></svg>
<svg style="left:868.00px;top:76.00px;" width="16" height="16" viewBox="0 0 16 16"><rect x="0.5" y="0.5" width="8" height="15" rx="1.5" fill="#111"/><circle cx="4.5" cy="3.5" r="2" fill="#e01010"/><circle cx="4.5" cy="8" r="2" fill="#e0c010"/><circle cx="4.5" cy="12.5" r="2" fill="#10c010"/><path d="M10.5 4L15 8L10.5 12Z" fill="none" stroke="#333" stroke-width="0.9"/></svg>
<svg style="left:903.00px;top:76.00px;" width="14" height="15" viewBox="0 0 14 15"><path d="M4 0.5V11" stroke="#111" stroke-width="1"/><rect x="0.5" y="10" width="9" height="4" rx="1" fill="#d0a000" stroke="#604000" stroke-width="0.7"/><path d="M3 5.5H6M9.5 2V7M7 4.5H12" stroke="#c09000" stroke-width="1.8"/><path d="M4 1v9" stroke="#c09000" stroke-width="1.6"/></svg>
<svg style="left:922.00px;top:76.00px;" width="13" height="15" viewBox="0 0 13 15"><path d="M4 0.5V10" stroke="#d8c060" stroke-width="1.2"/><rect x="0.5" y="10" width="10" height="4" rx="1" fill="#f0e0a0" stroke="#c0a040" stroke-width="0.7"/><path d="M4 3H9" stroke="#c0a040" stroke-width="1"/></svg>
<svg style="left:940.00px;top:76.00px;" width="15" height="15" viewBox="0 0 15 15"><path d="M0.5 1.5H4.5V13.5H14.5" stroke="#20a040" stroke-width="1.5" fill="none"/><path d="M7 7H14M9.5 4.2L6.5 7L9.5 9.8" stroke="#1a1ad0" stroke-width="2" fill="none"/></svg>
<svg style="left:958.50px;top:76.00px;" width="15" height="15" viewBox="0 0 15 15"><path d="M0.5 13.5H10.5V1.5H14.5" stroke="#20a040" stroke-width="1.5" fill="none"/><path d="M1 7H8M5.5 4.2L8.5 7L5.5 9.8" stroke="#1a1ad0" stroke-width="2" fill="none"/></svg>
<svg style="left:977.00px;top:76.00px;" width="15" height="15" viewBox="0 0 15 15"><path d="M1 1H5V13H14" stroke="#60c080" stroke-width="1" stroke-dasharray="1.2 0.8" fill="none"/><path d="M4 9H10M6 7.5L4 9L6 10.5" stroke="#6040e0" stroke-width="1" fill="none"/></svg>
<svg style="left:996.00px;top:76.00px;" width="15" height="15" viewBox="0 0 15 15"><path d="M1 1H9V13H14" stroke="#60c080" stroke-width="1" stroke-dasharray="1.2 0.8" fill="none"/><path d="M4 9H10M6 7.5L4 9L6 10.5" stroke="#6040e0" stroke-width="1" fill="none"/></svg>
<svg style="left:1015.00px;top:76.00px;" width="15" height="15" viewBox="0 0 15 15"><path d="M14 1H9V13H1" stroke="#60c080" stroke-width="1" stroke-dasharray="1.2 0.8" fill="none"/><path d="M4 9H10M6 7.5L4 9L6 10.5" stroke="#6040e0" stroke-width="1" fill="none"/></svg>
<svg style="left:1034.00px;top:76.00px;" width="15" height="15" viewBox="0 0 15 15"><path d="M14 1H5V13H1" stroke="#60c080" stroke-width="1" stroke-dasharray="1.2 0.8" fill="none"/><path d="M4 9H10M6 7.5L4 9L6 10.5" stroke="#6040e0" stroke-width="1" fill="none"/></svg>
<svg style="left:13.00px;top:103.00px;" width="15" height="15" viewBox="0 0 15 15"><path d="M1 1 C4 1 4 4 1 5 C4 6 4 9 1 10 C4 11 4 14 1 14 M3 7.5H7" stroke="#333" stroke-width="1" fill="none" stroke-dasharray="1.5 0.5"/><path d="M8 7.5H14M10.5 5L8 7.5L10.5 10" stroke="#4a90f0" stroke-width="2" fill="none"/></svg>
<svg style="left:32.00px;top:110.00px;" width="4" height="2.5" viewBox="0 0 4 2.5"><path d="M0 0H4L2 2.5Z" fill="#444"/></svg>
<svg style="left:40.00px;top:103.00px;" width="14" height="15" viewBox="0 0 14 15"><path d="M1 7.5H6M3.5 5L6 7.5L3.5 10" stroke="#4a90f0" stroke-width="2" fill="none"/><path d="M13 1 C10 1 10 4 7 7.5 C10 11 10 14 13 14" stroke="#333" stroke-width="1" fill="none" stroke-dasharray="1.5 0.5"/></svg>
<svg style="left:58.50px;top:110.00px;" width="4" height="2.5" viewBox="0 0 4 2.5"><path d="M0 0H4L2 2.5Z" fill="#444"/></svg>
<svg style="left:66.00px;top:103.00px;" width="15" height="15" viewBox="0 0 15 15"><path d="M0 1.5h4M0 7.5h4M0 13.5h4" stroke="#555" stroke-dasharray="1 0.6"/><path d="M8 3L12.5 7.5L8 12L3.5 7.5Z" fill="#40a040" stroke="#207020" stroke-width="0.6"/><circle cx="14" cy="7.5" r="1.1" fill="#3030e0"/></svg>
<svg style="left:88.00px;top:103.00px;" width="1" height="16" viewBox="0 0 1 16"><line x1="0.5" y1="0" x2="0.5" y2="16" stroke="#555" stroke-dasharray="1 1"/></svg>
<div style="left:96.05px;top:104.47px;height:13px;line-height:13px;font-family:'Liberation Sans',sans-serif;font-size:10px;letter-spacing:-0.395px;color:#888;white-space:pre;">Search:</div>
<div style="left:133.00px;top:104.00px;width:99.00px;height:16.00px;background:#f0f0f0;border-top:1px solid #b4b4b4;border-left:1px solid #b4b4b4;border-bottom:1px solid #fff;box-sizing:border-box"></div>
<div style="left:233.00px;top:104.00px;width:15.00px;height:16.00px;background:#f0f0f0;border-top:1px solid #fff;border-left:1px solid #fff;border-right:1px solid #a0a0a0;border-bottom:1px solid #a0a0a0;box-sizing:border-box"></div>
<svg style="left:236.00px;top:110.00px;" width="9" height="5" viewBox="0 0 9 5"><path d="M0 0H9L4.5 5Z" fill="#777"/></svg>
<svg style="left:252.00px;top:103.00px;" width="15" height="15" viewBox="0 0 15 15"><path d="M1 11 L2 4 L4 1.5 H6 V11Z M13 11 L12 4 L10 1.5 H8 V11Z" fill="#999"/><rect x="5.5" y="4" width="3" height="4" fill="#999"/><path d="M1 13 L4 13 M3 12 L1 13 L3 14 M10 13 L14 13 M12 12 L14 13 L12 14" stroke="#3040e0" fill="none"/></svg>
<svg style="left:268.00px;top:103.00px;" width="15" height="15" viewBox="0 0 15 15"><path d="M1 11 L2 4 L4 1.5 H6 V11Z M13 11 L12 4 L10 1.5 H8 V11Z" fill="#999"/><rect x="5.5" y="4" width="3" height="4" fill="#999"/><path d="M1 13 L4 13 M3 12 L1 13 L3 14 M10 13 L14 13 M12 12 L14 13 L12 14" stroke="#3040e0" fill="none"/></svg>
<svg style="left:289.00px;top:103.00px;" width="15" height="15" viewBox="0 0 15 15"><path d="M1 10 L2 4 L4 1.5 H6 V10Z M11 10 L10 4 L8 1.5 H7 V10Z" fill="#aaa"/><path d="M4 14 L13 6 L15 8 L6 15Z" fill="#b0c8f0"/></svg>
<svg style="left:325.00px;top:103.00px;" width="16" height="16" viewBox="0 0 16 16"><circle cx="6" cy="6" r="4.8" fill="#fff" stroke="#111" stroke-width="1.5"/><path d="M3.5 6h5M6 3.5v5" stroke="#111" stroke-width="1.4"/><path d="M9.5 9.5L14.5 14.5" stroke="#2030c0" stroke-width="2.4"/></svg>
<svg style="left:344.00px;top:103.00px;" width="16" height="16" viewBox="0 0 16 16"><circle cx="6" cy="6" r="4.8" fill="#fff" stroke="#111" stroke-width="1.5"/><path d="M3.5 6h5" stroke="#111" stroke-width="1.4"/><path d="M9.5 9.5L14.5 14.5" stroke="#2030c0" stroke-width="2.4"/></svg>
<svg style="left:364.00px;top:103.00px;" width="14" height="16" viewBox="0 0 14 16"><circle cx="6" cy="6" r="5" fill="#0a3a8a" stroke="#111" stroke-width="1"/><circle cx="4.5" cy="4.5" r="1.5" fill="#5080c0"/><path d="M9.5 9.5L13.5 14.5" stroke="#2030c0" stroke-width="2.4"/></svg>
<svg style="left:382.00px;top:103.00px;" width="14" height="15" viewBox="0 0 14 15"><path d="M4 3V11" stroke="#c09000" stroke-width="1.8"/><rect x="0.5" y="10.5" width="9" height="4" fill="#f0d060" stroke="#906000" stroke-width="0.8"/><circle cx="10" cy="4" r="3" fill="#fff" stroke="#333" stroke-width="1.1"/><path d="M12 6.5L14 9" stroke="#2030c0" stroke-width="1.6"/></svg>
<svg style="left:400.00px;top:103.00px;" width="15" height="15" viewBox="0 0 15 15"><path d="M3 4V11M9 4V11" stroke="#c09000" stroke-width="1.6"/><rect x="0.5" y="10.5" width="5" height="4" fill="#f0d060" stroke="#906000" stroke-width="0.8"/><rect x="6.5" y="10.5" width="5" height="4" fill="#f0d060" stroke="#906000" stroke-width="0.8"/><circle cx="10" cy="4" r="3" fill="#fff" stroke="#333" stroke-width="1.1"/><path d="M12 6.5L14 9" stroke="#2030c0" stroke-width="1.6"/></svg>
<svg style="left:418.00px;top:103.00px;" width="15" height="15" viewBox="0 0 15 15"><rect x="0.5" y="0.5" width="10" height="11" fill="#f0f4ff" stroke="#5060c0" stroke-width="0.8" stroke-dasharray="1.2 0.6"/><circle cx="9" cy="9" r="3.2" fill="#fff" stroke="#555" stroke-width="1.1"/><path d="M11.5 11.5L14.5 14.5" stroke="#2030c0" stroke-width="1.6"/></svg>
<div style="left:453.00px;top:104.00px;width:17.00px;height:16.00px;background:#fff;border-top:1px solid #b8b8b8;border-left:1px solid #b8b8b8;box-sizing:border-box"></div>
<svg style="left:455.00px;top:106.00px;" width="13" height="12" viewBox="0 0 13 12"><path d="M6.5 0V11M1 11H12" stroke="#20a040" stroke-width="1"/></svg>
<div style="left:475.00px;top:104.00px;width:17.00px;height:16.00px;background:#f0f0f0;border-top:1px solid #fff;border-left:1px solid #fff;border-right:1px solid #a0a0a0;border-bottom:1px solid #a0a0a0;box-sizing:border-box"></div>
<svg style="left:477.00px;top:106.00px;" width="13" height="12" viewBox="0 0 13 12"><rect x="4" y="0" width="5" height="11" fill="#1a2a8a"/><path d="M0 11H13" stroke="#20a040"/><path d="M4.5 1v10M8.5 1v10" stroke="#5060c0" stroke-width="0.6"/></svg>
<div style="left:497.00px;top:104.00px;width:17.00px;height:16.00px;background:#f0f0f0;border-top:1px solid #fff;border-left:1px solid #fff;border-right:1px solid #a0a0a0;border-bottom:1px solid #a0a0a0;box-sizing:border-box"></div>
<svg style="left:499.00px;top:106.00px;" width="13" height="12" viewBox="0 0 13 12"><rect x="0.5" y="0" width="12" height="12" fill="#0a5a0a"/><path d="M3 0v12M6 0v12M9 0v12" stroke="#20a020" stroke-width="0.8"/></svg>
<svg style="left:521.00px;top:105.00px;" width="1" height="14" viewBox="0 0 1 14"><line x1="0.5" y1="0" x2="0.5" y2="14" stroke="#555" stroke-dasharray="1 1"/></svg>
<svg style="left:527.00px;top:104.00px;" width="16" height="15" viewBox="0 0 16 15"><rect x="0.5" y="0.5" width="15" height="14" fill="#7070d0"/><path d="M0 3h16M0 6h16M0 9h16M0 12h16M3 0v15M6 0v15M9 0v15M12 0v15" stroke="#a0a0e0" stroke-width="0.6" stroke-dasharray="0.8 0.8"/></svg>
<svg style="left:547.00px;top:104.00px;" width="13" height="15" viewBox="0 0 13 15"><path d="M1 14H4V1H12" stroke="#60c060" stroke-width="1" stroke-dasharray="1.2 0.8" fill="none"/><path d="M4 2V14" stroke="#e0e020" stroke-width="1.2"/><path d="M6 2V14" stroke="#6070d0" stroke-width="1.8"/></svg>
<svg style="left:565.00px;top:104.00px;" width="14" height="15" viewBox="0 0 14 15"><path d="M1 14H7V1H13" stroke="#40b040" stroke-width="1" stroke-dasharray="1.2 0.8" fill="none"/></svg>
<svg style="left:584.00px;top:104.00px;" width="14" height="15" viewBox="0 0 14 15"><path d="M1 14H7V1H13" stroke="#40b040" stroke-width="1" stroke-dasharray="1.2 0.8" fill="none"/><path d="M7 2V14" stroke="#e0e020" stroke-width="1"/></svg>
<svg style="left:619.00px;top:104.00px;" width="14" height="15" viewBox="0 0 14 15"><path d="M1 1L11 14M11 1L1 14" stroke="#c03030" stroke-width="1" stroke-dasharray="1.5 0.5"/><path d="M14 4L10 7.5L14 11Z" fill="#555"/></svg>
<svg style="left:636.00px;top:104.00px;" width="14" height="15" viewBox="0 0 14 15"><path d="M3 1L13 14M13 1L3 14" stroke="#c03030" stroke-width="1" stroke-dasharray="1.5 0.5"/><path d="M0 4L4 7.5L0 11Z" fill="#555"/></svg>
<div style="left:655.00px;top:104.00px;width:18.00px;height:17.00px;background:#f0f0f0;border-top:1px solid #fff;border-left:1px solid #fff;border-right:1px solid #a0a0a0;border-bottom:1px solid #a0a0a0;box-sizing:border-box"></div>
<svg style="left:658.00px;top:106.00px;" width="12" height="13" viewBox="0 0 12 13"><rect x="0.5" y="0.5" width="10" height="12" fill="#fff" stroke="#555" stroke-width="0.8" stroke-dasharray="1 0.5"/><path d="M3 6 L8 10 M8 6 L3 10" stroke="#d03030" stroke-width="0.9"/><path d="M2 3h6" stroke="#555"/></svg>
<svg style="left:679.00px;top:104.00px;" width="14" height="15" viewBox="0 0 14 15"><path d="M1 1L9 9M9 1L1 9" stroke="#c04040" stroke-width="1.6"/><path d="M6 11 C6 6 12 6 13 10 C13 14 8 15 6 11Z" fill="#5060d0"/></svg>
<div style="left:0.00px;top:126.00px;width:1080.00px;height:357.00px;background:#d0d0d0"></div>
<div style="left:1.00px;top:126.00px;width:212.00px;height:331.00px;background:#f0f0f0"></div>
<svg style="left:3.00px;top:128.00px;" width="14" height="15" viewBox="0 0 14 15"><path d="M4.5 1.5 L12 0.7 L13.5 2.2 L12.8 10 L5.5 10.8Z" fill="#f4f4ff" stroke="#222" stroke-width="0.9"/><path d="M6.5 3.2h4.5M6.6 5h4.5M6.7 6.8h4.5M6.8 8.6h3" stroke="#7080c0" stroke-width="0.8"/><path d="M0.8 2h2.5M0.8 4h2.5M0.8 6h2.5M0.8 8h2.5" stroke="#9aa0e0" stroke-width="0.8" stroke-dasharray="1 0.5"/><circle cx="3.2" cy="12.2" r="2.4" fill="#c80010" stroke="#300" stroke-width="0.6"/><circle cx="12" cy="12.5" r="2.1" fill="#c80010" stroke="#300" stroke-width="0.6"/></svg>
<div style="left:18.85px;top:129.82px;height:13px;line-height:13px;font-family:'Liberation Sans',sans-serif;font-size:10px;letter-spacing:-0.352px;color:#222;white-space:pre;">sim - Default</div>
<div style="left:75.00px;top:133.00px;width:39.00px;height:1.00px;background:#ffffff"></div>
<div style="left:75.00px;top:134.00px;width:39.00px;height:1.30px;background:#a0a0a0"></div>
<div style="left:133.00px;top:133.00px;width:37.00px;height:1.00px;background:#ffffff"></div>
<div style="left:133.00px;top:134.00px;width:37.00px;height:1.30px;background:#a0a0a0"></div>
<div style="left:169.00px;top:132.00px;width:1.20px;height:2.30px;background:#a0a0a0"></div>
<div style="left:75.00px;top:137.30px;width:39.00px;height:1.00px;background:#ffffff"></div>
<div style="left:75.00px;top:138.30px;width:39.00px;height:1.30px;background:#a0a0a0"></div>
<div style="left:133.00px;top:137.30px;width:37.00px;height:1.00px;background:#ffffff"></div>
<div style="left:133.00px;top:138.30px;width:37.00px;height:1.30px;background:#a0a0a0"></div>
<div style="left:169.00px;top:136.30px;width:1.20px;height:2.30px;background:#a0a0a0"></div>
<svg style="left:116.00px;top:132.50px;" width="15" height="9" viewBox="0 0 15 9"><path d="M0.5 1H15M0.5 7H15" stroke="#999" stroke-width="1.2" stroke-dasharray="1.2 1.3"/><path d="M1.5 4H15" stroke="#666" stroke-width="1.1" stroke-dasharray="1.2 1.3"/></svg>
<div style="left:172.50px;top:130.00px;width:11.00px;height:11.00px;background:#f4f4f4;border-right:1px solid #9a9a9a;border-bottom:1px solid #9a9a9a;box-sizing:border-box"></div>
<svg style="left:174.00px;top:131.50px;" width="8" height="8" viewBox="0 0 8 8"><path d="M4 0.5V7.5M0.5 4H7.5" stroke="#000" stroke-width="1.8"/></svg>
<div style="left:186.10px;top:130.00px;width:11.00px;height:11.00px;background:#f4f4f4;border-right:1px solid #9a9a9a;border-bottom:1px solid #9a9a9a;box-sizing:border-box"></div>
<svg style="left:187.60px;top:131.50px;" width="8" height="8" viewBox="0 0 8 8"><rect x="0.7" y="3.2" width="4" height="4" fill="none" stroke="#000" stroke-width="1.2"/><path d="M3 5L7 1M4 0.8H7.2V4" stroke="#000" stroke-width="1.4" fill="none"/></svg>
<div style="left:199.70px;top:130.00px;width:11.00px;height:11.00px;background:#f4f4f4;border-right:1px solid #9a9a9a;border-bottom:1px solid #9a9a9a;box-sizing:border-box"></div>
<svg style="left:201.20px;top:131.50px;" width="8" height="8" viewBox="0 0 8 8"><path d="M0.8 0.8L7.2 7.2M7.2 0.8L0.8 7.2" stroke="#000" stroke-width="1.5"/></svg>
<div style="left:2.50px;top:144.00px;width:210.50px;height:15.00px;background:#f0f0f0;border-top:1px solid #d8d8d8;border-bottom:1px solid #a0a0a0;box-sizing:border-box"></div>
<div style="left:12.50px;top:145.00px;width:1.00px;height:13.00px;background:#a0a0a0"></div>
<svg style="left:5.00px;top:149.00px;" width="6" height="5.5" viewBox="0 0 6 5.5"><path d="M0 0H6L3 5.5Z" fill="#444"/></svg>
<div style="left:14.35px;top:145.87px;height:13px;line-height:13px;font-family:'Liberation Sans',sans-serif;font-size:10px;letter-spacing:-0.259px;color:#222;white-space:pre;">Instance</div>
<div style="left:127.50px;top:145.00px;width:1.00px;height:13.00px;background:#a0a0a0"></div>
<div style="left:128.95px;top:145.87px;height:13px;line-height:13px;font-family:'Liberation Sans',sans-serif;font-size:10px;letter-spacing:-0.463px;color:#222;white-space:pre;">Design unit</div>
<div style="left:187.00px;top:145.00px;width:1.00px;height:13.00px;background:#a0a0a0"></div>
<div style="left:188.95px;top:145.87px;height:13px;line-height:13px;font-family:'Liberation Sans',sans-serif;font-size:10px;letter-spacing:-0.350px;color:#222;white-space:pre;width:24px;overflow:hidden;">Design</div>
<div style="left:0.00px;top:126.00px;width:1.00px;height:330.00px;background:#b0b0b0"></div>
<div style="left:2.00px;top:144.00px;width:1.00px;height:297.00px;background:#c8c8c8"></div>
<div style="left:3.00px;top:159.00px;width:210.00px;height:282.00px;background:#fff"></div>
<div style="left:2.00px;top:189.00px;width:211.00px;height:12.00px;background:#c2ccd9"></div>
<svg style="left:7.00px;top:163.00px;" width="40" height="42" viewBox="0 0 40 42"><path d="M9 5.5H14.5M20.5 10.5V32.5M24.5 19.5H29.5M20.5 32.5H29" stroke="#888" stroke-width="1" fill="none"/><rect x="0.5" y="1.5" width="8.5" height="8" rx="1.5" fill="#f4f4fa" stroke="#8890a0" stroke-width="0.8"/><path d="M2.5 5.5H7" stroke="#000" stroke-width="1"/><rect x="16.5" y="15" width="8" height="8" rx="1.5" fill="#f4f4fa" stroke="#8890a0" stroke-width="0.8"/><path d="M18 19.5H23M20.5 17V22" stroke="#000" stroke-width="1"/></svg>
<svg style="left:21.70px;top:162.80px;" width="10.5" height="10.5" viewBox="0 0 10.5 10.5"><path d="M0 0H10.5V10.5H0Z" fill="#0a5a88"/><path d="M0 0H10.5L0 10.5Z" fill="#8adcf8"/><rect x="2.6" y="2.6" width="5.3" height="5.3" fill="#12c2f2"/></svg>
<div style="left:37.25px;top:160.57px;height:13px;line-height:13px;font-family:'Liberation Sans',sans-serif;font-size:10px;letter-spacing:-0.269px;color:#111;white-space:pre;">full_adder_tb</div>
<svg style="left:36.80px;top:176.50px;" width="10.5" height="10.5" viewBox="0 0 10.5 10.5"><path d="M0 0H10.5V10.5H0Z" fill="#0a5a88"/><path d="M0 0H10.5L0 10.5Z" fill="#8adcf8"/><rect x="2.6" y="2.6" width="5.3" height="5.3" fill="#12c2f2"/></svg>
<div style="left:51.55px;top:174.27px;height:13px;line-height:13px;font-family:'Liberation Sans',sans-serif;font-size:10px;letter-spacing:-0.295px;color:#111;white-space:pre;">u_full_adder</div>
<svg style="left:36.00px;top:189.00px;" width="12" height="12" viewBox="0 0 12 12"><circle cx="6" cy="6" r="5.5" fill="#1a98c8"/><circle cx="5" cy="5" r="4" fill="#38c0e8"/><circle cx="4" cy="3.8" r="1.5" fill="#c8f0ff"/></svg>
<div style="left:52.15px;top:188.07px;height:13px;line-height:13px;font-family:'Liberation Sans',sans-serif;font-size:10px;letter-spacing:-0.096px;color:#111;white-space:pre;">#INITIAL#15</div>
<svg style="left:20.00px;top:202.00px;" width="14" height="14" viewBox="0 0 14 14"><path d="M0.7 0V13.3H14" stroke="#2040e0" stroke-width="1.4" fill="none"/><path d="M2 12 C4 6 9 6 13 12Z" fill="#20b040"/><path d="M2 3 C5 9 8 9 12 2" stroke="#e02020" stroke-width="1.6" fill="none"/><path d="M2 9 L6 3 L9 7 L13 2" stroke="#20a0c0" stroke-width="1.2" fill="none"/></svg>
<div style="left:37.85px;top:201.67px;height:13px;line-height:13px;font-family:'Liberation Sans',sans-serif;font-size:10px;letter-spacing:-0.237px;color:#111;white-space:pre;">#vsim_capacity#</div>
<div style="left:128.95px;top:160.57px;height:13px;line-height:13px;font-family:'Liberation Sans',sans-serif;font-size:10px;letter-spacing:-0.156px;color:#111;white-space:pre;">full_adder_...</div>
<div style="left:128.95px;top:174.27px;height:13px;line-height:13px;font-family:'Liberation Sans',sans-serif;font-size:10px;letter-spacing:-0.115px;color:#111;white-space:pre;">full_adder(...</div>
<div style="left:128.95px;top:188.07px;height:13px;line-height:13px;font-family:'Liberation Sans',sans-serif;font-size:10px;letter-spacing:-0.156px;color:#111;white-space:pre;">full_adder_...</div>
<div style="left:188.45px;top:160.57px;height:13px;line-height:13px;font-family:'Liberation Sans',sans-serif;font-size:10px;letter-spacing:-0.350px;color:#111;white-space:pre;width:24px;overflow:hidden;">Module</div>
<div style="left:188.45px;top:174.27px;height:13px;line-height:13px;font-family:'Liberation Sans',sans-serif;font-size:10px;letter-spacing:-0.350px;color:#111;white-space:pre;width:24px;overflow:hidden;">Module</div>
<div style="left:188.45px;top:188.07px;height:13px;line-height:13px;font-family:'Liberation Sans',sans-serif;font-size:10px;letter-spacing:-0.350px;color:#111;white-space:pre;width:24px;overflow:hidden;">Process</div>
<div style="left:188.45px;top:201.67px;height:13px;line-height:13px;font-family:'Liberation Sans',sans-serif;font-size:10px;letter-spacing:-0.350px;color:#111;white-space:pre;width:24px;overflow:hidden;">Capacity</div>
<div style="left:2.00px;top:441.00px;width:211.00px;height:15.00px;background:#f8f8f8"></div>
<div style="left:2.00px;top:442.00px;width:14.00px;height:13.00px;background:#f0f0f0;border-right:1px solid #a0a0a0;border-bottom:1px solid #a0a0a0;box-sizing:border-box"></div>
<svg style="left:7.00px;top:445.00px;" width="4" height="7" viewBox="0 0 4 7"><path d="M4 0V7L0 3.5Z" fill="#000"/></svg>
<div style="left:16.00px;top:442.00px;width:82.00px;height:13.00px;background:#f0f0f0;border-right:1px solid #a0a0a0;border-bottom:1px solid #a0a0a0;border-left:1px solid #fff;box-sizing:border-box"></div>
<div style="left:200.00px;top:442.00px;width:13.50px;height:13.00px;background:#f0f0f0;border-right:1px solid #a0a0a0;border-bottom:1px solid #a0a0a0;box-sizing:border-box"></div>
<svg style="left:205.00px;top:445.00px;" width="4" height="7" viewBox="0 0 4 7"><path d="M0 0V7L4 3.5Z" fill="#000"/></svg>
<div style="left:1.00px;top:455.50px;width:213.00px;height:1.00px;background:#a0a0a0"></div>
<div style="left:220.00px;top:126.00px;width:213.00px;height:172.00px;background:#f0f0f0"></div>
<div style="left:220.30px;top:126.00px;width:1.00px;height:172.00px;background:#a8a8a8"></div>
<svg style="left:222.50px;top:129.00px;" width="14" height="14" viewBox="0 0 14 14"><path d="M1 5 L6 0.5 L9 3 L4 7.5Z" fill="#b020d0"/><rect x="7" y="6.5" width="6.5" height="6" fill="#10a040"/><circle cx="7.5" cy="5.5" r="3" fill="#10d8f0"/><path d="M0.5 9.5 L5 5 L9.5 9.5 L5 14Z" fill="#1050f0"/></svg>
<div style="left:238.75px;top:129.92px;height:13px;line-height:13px;font-family:'Liberation Sans',sans-serif;font-size:10px;letter-spacing:-0.218px;color:#222;white-space:pre;">Objects</div>
<div style="left:275.50px;top:133.00px;width:47.50px;height:1.00px;background:#ffffff"></div>
<div style="left:275.50px;top:134.00px;width:47.50px;height:1.30px;background:#a0a0a0"></div>
<div style="left:342.00px;top:133.00px;width:49.00px;height:1.00px;background:#ffffff"></div>
<div style="left:342.00px;top:134.00px;width:49.00px;height:1.30px;background:#a0a0a0"></div>
<div style="left:390.00px;top:132.00px;width:1.20px;height:2.30px;background:#a0a0a0"></div>
<div style="left:275.50px;top:137.30px;width:47.50px;height:1.00px;background:#ffffff"></div>
<div style="left:275.50px;top:138.30px;width:47.50px;height:1.30px;background:#a0a0a0"></div>
<div style="left:342.00px;top:137.30px;width:49.00px;height:1.00px;background:#ffffff"></div>
<div style="left:342.00px;top:138.30px;width:49.00px;height:1.30px;background:#a0a0a0"></div>
<div style="left:390.00px;top:136.30px;width:1.20px;height:2.30px;background:#a0a0a0"></div>
<svg style="left:325.00px;top:132.50px;" width="15" height="9" viewBox="0 0 15 9"><path d="M0.5 1H15M0.5 7H15" stroke="#999" stroke-width="1.2" stroke-dasharray="1.2 1.3"/><path d="M1.5 4H15" stroke="#666" stroke-width="1.1" stroke-dasharray="1.2 1.3"/></svg>
<div style="left:392.00px;top:130.00px;width:11.00px;height:11.00px;background:#f4f4f4;border-right:1px solid #9a9a9a;border-bottom:1px solid #9a9a9a;box-sizing:border-box"></div>
<svg style="left:393.50px;top:131.50px;" width="8" height="8" viewBox="0 0 8 8"><path d="M4 0.5V7.5M0.5 4H7.5" stroke="#000" stroke-width="1.8"/></svg>
<div style="left:405.60px;top:130.00px;width:11.00px;height:11.00px;background:#f4f4f4;border-right:1px solid #9a9a9a;border-bottom:1px solid #9a9a9a;box-sizing:border-box"></div>
<svg style="left:407.10px;top:131.50px;" width="8" height="8" viewBox="0 0 8 8"><rect x="0.7" y="3.2" width="4" height="4" fill="none" stroke="#000" stroke-width="1.2"/><path d="M3 5L7 1M4 0.8H7.2V4" stroke="#000" stroke-width="1.4" fill="none"/></svg>
<div style="left:419.20px;top:130.00px;width:11.00px;height:11.00px;background:#f4f4f4;border-right:1px solid #9a9a9a;border-bottom:1px solid #9a9a9a;box-sizing:border-box"></div>
<svg style="left:420.70px;top:131.50px;" width="8" height="8" viewBox="0 0 8 8"><path d="M0.8 0.8L7.2 7.2M7.2 0.8L0.8 7.2" stroke="#000" stroke-width="1.5"/></svg>
<div style="left:222.50px;top:143.00px;width:210.50px;height:16.00px;background:#f0f0f0;border-top:1px solid #c8c8c8;border-bottom:1px solid #a0a0a0;box-sizing:border-box"></div>
<div style="left:232.30px;top:144.00px;width:1.00px;height:14.00px;background:#a0a0a0"></div>
<svg style="left:225.00px;top:149.00px;" width="7" height="6" viewBox="0 0 7 6"><path d="M0 0H7L3.5 6Z" fill="#333"/></svg>
<div style="left:233.55px;top:145.87px;height:13px;line-height:13px;font-family:'Liberation Sans',sans-serif;font-size:10px;letter-spacing:-0.863px;color:#222;white-space:pre;">Name</div>
<div style="left:347.30px;top:144.00px;width:1.00px;height:14.00px;background:#a0a0a0"></div>
<div style="left:348.35px;top:145.87px;height:13px;line-height:13px;font-family:'Liberation Sans',sans-serif;font-size:10px;letter-spacing:-0.300px;color:#222;white-space:pre;">Va</div>
<div style="left:358.50px;top:144.50px;width:64.50px;height:13.50px;background:#e4eee4"></div>
<div style="left:372.50px;top:145.00px;width:1.00px;height:13.00px;background:#d0d8d0"></div>
<div style="left:408.50px;top:145.00px;width:1.00px;height:13.00px;background:#d0d8d0"></div>
<svg style="left:360.00px;top:146.00px;" width="12" height="11" viewBox="0 0 12 11"><path d="M1 1H3V10H6" stroke="#333" stroke-width="1.2" fill="none"/><path d="M5 5H11M8 2.5L5 5L8 7.5" stroke="#555" stroke-width="1.6" fill="none"/></svg>
<svg style="left:374.50px;top:146.50px;" width="9" height="9" viewBox="0 0 9 9"><rect x="0.5" y="0.5" width="8" height="8" fill="#ff8000" stroke="#222" stroke-width="0.8"/></svg>
<div style="left:385.05px;top:145.87px;height:13px;line-height:13px;font-family:'Liberation Sans',sans-serif;font-size:10px;letter-spacing:-0.758px;color:#b8c0b8;white-space:pre;">Now</div>
<svg style="left:410.00px;top:146.00px;" width="12" height="11" viewBox="0 0 12 11"><path d="M11 1H9V10H6" stroke="#333" stroke-width="1.2" fill="none"/><path d="M0 5H6M3.5 2.5L6.5 5L3.5 7.5" stroke="#555" stroke-width="1.6" fill="none"/></svg>
<div style="left:423.00px;top:144.50px;width:10.00px;height:13.50px;background:#f4f4f4"></div>
<svg style="left:425.50px;top:147.50px;" width="5" height="8" viewBox="0 0 5 8"><path d="M0 0V8L5 4Z" fill="#000"/></svg>
<div style="left:222.50px;top:158.00px;width:210.00px;height:122.50px;background:#525a8a"></div>
<svg style="left:239.50px;top:160.80px;" width="13" height="13" viewBox="0 0 13 13"><path d="M6.5 0.5L0.5 6.5L3.6 6.5L6.5 3.6Z" fill="#86d8f8"/><path d="M6.5 0.5L12.5 6.5L9.4 6.5L6.5 3.6Z" fill="#2aa0dc"/><path d="M12.5 6.5L6.5 12.5L6.5 9.4L9.4 6.5Z" fill="#0c64a4"/><path d="M0.5 6.5L6.5 12.5L6.5 9.4L3.6 6.5Z" fill="#1a88c8"/><path d="M6.5 3.6L9.4 6.5L6.5 9.4L3.6 6.5Z" fill="#12c0f2"/></svg>
<div style="left:256.05px;top:161.37px;height:13px;line-height:13px;font-family:'Liberation Sans',sans-serif;font-size:10px;letter-spacing:-1.266px;color:#e8e8ee;white-space:pre;">DELAY</div>
<div style="left:349.05px;top:161.37px;height:13px;line-height:13px;font-family:'Liberation Sans',sans-serif;font-size:10px;letter-spacing:-0.043px;color:#e8e8ee;white-space:pre;">32'h0...</div>
<div style="left:385.75px;top:161.37px;height:13px;line-height:13px;font-family:'Liberation Sans',sans-serif;font-size:10px;letter-spacing:-0.145px;color:#e8e8ee;white-space:pre;">Para...</div>
<div style="left:417.85px;top:161.37px;height:13px;line-height:13px;font-family:'Liberation Sans',sans-serif;font-size:10px;letter-spacing:-0.350px;color:#e8e8ee;white-space:pre;width:14px;overflow:hidden;">Internal</div>
<svg style="left:239.50px;top:174.50px;" width="13" height="13" viewBox="0 0 13 13"><path d="M6.5 0.5L0.5 6.5L3.6 6.5L6.5 3.6Z" fill="#86d8f8"/><path d="M6.5 0.5L12.5 6.5L9.4 6.5L6.5 3.6Z" fill="#2aa0dc"/><path d="M12.5 6.5L6.5 12.5L6.5 9.4L9.4 6.5Z" fill="#0c64a4"/><path d="M0.5 6.5L6.5 12.5L6.5 9.4L3.6 6.5Z" fill="#1a88c8"/><path d="M6.5 3.6L9.4 6.5L6.5 9.4L3.6 6.5Z" fill="#12c0f2"/></svg>
<div style="left:256.05px;top:175.07px;height:13px;line-height:13px;font-family:'Liberation Sans',sans-serif;font-size:10px;letter-spacing:-0.300px;color:#e8e8ee;white-space:pre;">a</div>
<div style="left:349.05px;top:175.07px;height:13px;line-height:13px;font-family:'Liberation Sans',sans-serif;font-size:10px;letter-spacing:-0.498px;color:#e8e8ee;white-space:pre;">1'h1</div>
<div style="left:385.75px;top:175.07px;height:13px;line-height:13px;font-family:'Liberation Sans',sans-serif;font-size:10px;letter-spacing:-0.118px;color:#e8e8ee;white-space:pre;">Regi...</div>
<div style="left:417.85px;top:175.07px;height:13px;line-height:13px;font-family:'Liberation Sans',sans-serif;font-size:10px;letter-spacing:-0.350px;color:#e8e8ee;white-space:pre;width:14px;overflow:hidden;">Internal</div>
<svg style="left:239.50px;top:188.20px;" width="13" height="13" viewBox="0 0 13 13"><path d="M6.5 0.5L0.5 6.5L3.6 6.5L6.5 3.6Z" fill="#86d8f8"/><path d="M6.5 0.5L12.5 6.5L9.4 6.5L6.5 3.6Z" fill="#2aa0dc"/><path d="M12.5 6.5L6.5 12.5L6.5 9.4L9.4 6.5Z" fill="#0c64a4"/><path d="M0.5 6.5L6.5 12.5L6.5 9.4L3.6 6.5Z" fill="#1a88c8"/><path d="M6.5 3.6L9.4 6.5L6.5 9.4L3.6 6.5Z" fill="#12c0f2"/></svg>
<div style="left:256.05px;top:188.77px;height:13px;line-height:13px;font-family:'Liberation Sans',sans-serif;font-size:10px;letter-spacing:-0.300px;color:#e8e8ee;white-space:pre;">b</div>
<div style="left:349.05px;top:188.77px;height:13px;line-height:13px;font-family:'Liberation Sans',sans-serif;font-size:10px;letter-spacing:-0.498px;color:#e8e8ee;white-space:pre;">1'h1</div>
<div style="left:385.75px;top:188.77px;height:13px;line-height:13px;font-family:'Liberation Sans',sans-serif;font-size:10px;letter-spacing:-0.118px;color:#e8e8ee;white-space:pre;">Regi...</div>
<div style="left:417.85px;top:188.77px;height:13px;line-height:13px;font-family:'Liberation Sans',sans-serif;font-size:10px;letter-spacing:-0.350px;color:#e8e8ee;white-space:pre;width:14px;overflow:hidden;">Internal</div>
<svg style="left:239.50px;top:201.90px;" width="13" height="13" viewBox="0 0 13 13"><path d="M6.5 0.5L0.5 6.5L3.6 6.5L6.5 3.6Z" fill="#86d8f8"/><path d="M6.5 0.5L12.5 6.5L9.4 6.5L6.5 3.6Z" fill="#2aa0dc"/><path d="M12.5 6.5L6.5 12.5L6.5 9.4L9.4 6.5Z" fill="#0c64a4"/><path d="M0.5 6.5L6.5 12.5L6.5 9.4L3.6 6.5Z" fill="#1a88c8"/><path d="M6.5 3.6L9.4 6.5L6.5 9.4L3.6 6.5Z" fill="#12c0f2"/></svg>
<div style="left:256.05px;top:202.47px;height:13px;line-height:13px;font-family:'Liberation Sans',sans-serif;font-size:10px;letter-spacing:-0.300px;color:#e8e8ee;white-space:pre;">cin</div>
<div style="left:349.05px;top:202.47px;height:13px;line-height:13px;font-family:'Liberation Sans',sans-serif;font-size:10px;letter-spacing:-0.498px;color:#e8e8ee;white-space:pre;">1'h1</div>
<div style="left:385.75px;top:202.47px;height:13px;line-height:13px;font-family:'Liberation Sans',sans-serif;font-size:10px;letter-spacing:-0.118px;color:#e8e8ee;white-space:pre;">Regi...</div>
<div style="left:417.85px;top:202.47px;height:13px;line-height:13px;font-family:'Liberation Sans',sans-serif;font-size:10px;letter-spacing:-0.350px;color:#e8e8ee;white-space:pre;width:14px;overflow:hidden;">Internal</div>
<svg style="left:239.50px;top:215.60px;" width="13" height="13" viewBox="0 0 13 13"><path d="M6.5 0.5L0.5 6.5L3.6 6.5L6.5 3.6Z" fill="#86d8f8"/><path d="M6.5 0.5L12.5 6.5L9.4 6.5L6.5 3.6Z" fill="#2aa0dc"/><path d="M12.5 6.5L6.5 12.5L6.5 9.4L9.4 6.5Z" fill="#0c64a4"/><path d="M0.5 6.5L6.5 12.5L6.5 9.4L3.6 6.5Z" fill="#1a88c8"/><path d="M6.5 3.6L9.4 6.5L6.5 9.4L3.6 6.5Z" fill="#12c0f2"/></svg>
<div style="left:256.05px;top:216.17px;height:13px;line-height:13px;font-family:'Liberation Sans',sans-serif;font-size:10px;letter-spacing:-0.300px;color:#e8e8ee;white-space:pre;">sum</div>
<div style="left:349.05px;top:216.17px;height:13px;line-height:13px;font-family:'Liberation Sans',sans-serif;font-size:10px;letter-spacing:-0.498px;color:#e8e8ee;white-space:pre;">1'h1</div>
<div style="left:385.75px;top:216.17px;height:13px;line-height:13px;font-family:'Liberation Sans',sans-serif;font-size:10px;letter-spacing:0.019px;color:#e8e8ee;white-space:pre;">Net</div>
<div style="left:417.85px;top:216.17px;height:13px;line-height:13px;font-family:'Liberation Sans',sans-serif;font-size:10px;letter-spacing:-0.350px;color:#e8e8ee;white-space:pre;width:14px;overflow:hidden;">Internal</div>
<svg style="left:239.50px;top:229.30px;" width="13" height="13" viewBox="0 0 13 13"><path d="M6.5 0.5L0.5 6.5L3.6 6.5L6.5 3.6Z" fill="#86d8f8"/><path d="M6.5 0.5L12.5 6.5L9.4 6.5L6.5 3.6Z" fill="#2aa0dc"/><path d="M12.5 6.5L6.5 12.5L6.5 9.4L9.4 6.5Z" fill="#0c64a4"/><path d="M0.5 6.5L6.5 12.5L6.5 9.4L3.6 6.5Z" fill="#1a88c8"/><path d="M6.5 3.6L9.4 6.5L6.5 9.4L3.6 6.5Z" fill="#12c0f2"/></svg>
<div style="left:256.05px;top:229.87px;height:13px;line-height:13px;font-family:'Liberation Sans',sans-serif;font-size:10px;letter-spacing:-0.300px;color:#e8e8ee;white-space:pre;">cout</div>
<div style="left:349.05px;top:229.87px;height:13px;line-height:13px;font-family:'Liberation Sans',sans-serif;font-size:10px;letter-spacing:-0.498px;color:#e8e8ee;white-space:pre;">1'h1</div>
<div style="left:385.75px;top:229.87px;height:13px;line-height:13px;font-family:'Liberation Sans',sans-serif;font-size:10px;letter-spacing:0.019px;color:#e8e8ee;white-space:pre;">Net</div>
<div style="left:417.85px;top:229.87px;height:13px;line-height:13px;font-family:'Liberation Sans',sans-serif;font-size:10px;letter-spacing:-0.350px;color:#e8e8ee;white-space:pre;width:14px;overflow:hidden;">Internal</div>
<div style="left:222.50px;top:280.50px;width:210.50px;height:4.00px;background:#fafafa"></div>
<div style="left:222.50px;top:284.00px;width:210.50px;height:13.00px;background:#f8f8f8"></div>
<div style="left:222.50px;top:284.00px;width:14.00px;height:12.50px;background:#f0f0f0;border-right:1px solid #a0a0a0;border-bottom:1px solid #a0a0a0;box-sizing:border-box"></div>
<svg style="left:227.50px;top:287.00px;" width="4" height="7" viewBox="0 0 4 7"><path d="M4 0V7L0 3.5Z" fill="#000"/></svg>
<div style="left:236.50px;top:284.00px;width:164.00px;height:12.50px;background:#f0f0f0;border-right:1px solid #a0a0a0;border-bottom:1px solid #a0a0a0;border-left:1px solid #fff;box-sizing:border-box"></div>
<div style="left:419.50px;top:284.00px;width:13.50px;height:12.50px;background:#f0f0f0;border-right:1px solid #a0a0a0;border-bottom:1px solid #a0a0a0;box-sizing:border-box"></div>
<svg style="left:424.50px;top:287.00px;" width="4" height="7" viewBox="0 0 4 7"><path d="M0 0V7L4 3.5Z" fill="#000"/></svg>
<div style="left:220.00px;top:297.00px;width:213.00px;height:1.00px;background:#a0a0a0"></div>
<div style="left:220.00px;top:304.00px;width:213.00px;height:172.00px;background:#f0f0f0"></div>
<div style="left:220.30px;top:304.00px;width:1.00px;height:172.00px;background:#a8a8a8"></div>
<svg style="left:223.00px;top:306.00px;" width="14" height="14" viewBox="0 0 14 14"><g transform="translate(7 7)"><circle r="5" fill="#4a78a8"/><path d="M0 -6.8V6.8M-6.8 0H6.8M-4.8 -4.8L4.8 4.8M4.8 -4.8L-4.8 4.8" stroke="#4a78a8" stroke-width="2.2"/><circle r="2.2" fill="#f0f0f0"/></g></svg>
<div style="left:238.75px;top:307.87px;height:13px;line-height:13px;font-family:'Liberation Sans',sans-serif;font-size:10px;letter-spacing:-0.409px;color:#222;white-space:pre;">Processes (Active)</div>
<div style="left:319.50px;top:311.00px;width:25.50px;height:1.00px;background:#ffffff"></div>
<div style="left:319.50px;top:312.00px;width:25.50px;height:1.30px;background:#a0a0a0"></div>
<div style="left:364.00px;top:311.00px;width:25.00px;height:1.00px;background:#ffffff"></div>
<div style="left:364.00px;top:312.00px;width:25.00px;height:1.30px;background:#a0a0a0"></div>
<div style="left:388.00px;top:310.00px;width:1.20px;height:2.30px;background:#a0a0a0"></div>
<div style="left:319.50px;top:315.30px;width:25.50px;height:1.00px;background:#ffffff"></div>
<div style="left:319.50px;top:316.30px;width:25.50px;height:1.30px;background:#a0a0a0"></div>
<div style="left:364.00px;top:315.30px;width:25.00px;height:1.00px;background:#ffffff"></div>
<div style="left:364.00px;top:316.30px;width:25.00px;height:1.30px;background:#a0a0a0"></div>
<div style="left:388.00px;top:314.30px;width:1.20px;height:2.30px;background:#a0a0a0"></div>
<svg style="left:347.00px;top:310.50px;" width="15" height="9" viewBox="0 0 15 9"><path d="M0.5 1H15M0.5 7H15" stroke="#999" stroke-width="1.2" stroke-dasharray="1.2 1.3"/><path d="M1.5 4H15" stroke="#666" stroke-width="1.1" stroke-dasharray="1.2 1.3"/></svg>
<div style="left:392.50px;top:307.50px;width:11.00px;height:11.00px;background:#f4f4f4;border-right:1px solid #9a9a9a;border-bottom:1px solid #9a9a9a;box-sizing:border-box"></div>
<svg style="left:394.00px;top:309.00px;" width="8" height="8" viewBox="0 0 8 8"><path d="M4 0.5V7.5M0.5 4H7.5" stroke="#000" stroke-width="1.8"/></svg>
<div style="left:406.10px;top:307.50px;width:11.00px;height:11.00px;background:#f4f4f4;border-right:1px solid #9a9a9a;border-bottom:1px solid #9a9a9a;box-sizing:border-box"></div>
<svg style="left:407.60px;top:309.00px;" width="8" height="8" viewBox="0 0 8 8"><rect x="0.7" y="3.2" width="4" height="4" fill="none" stroke="#000" stroke-width="1.2"/><path d="M3 5L7 1M4 0.8H7.2V4" stroke="#000" stroke-width="1.4" fill="none"/></svg>
<div style="left:419.70px;top:307.50px;width:11.00px;height:11.00px;background:#f4f4f4;border-right:1px solid #9a9a9a;border-bottom:1px solid #9a9a9a;box-sizing:border-box"></div>
<svg style="left:421.20px;top:309.00px;" width="8" height="8" viewBox="0 0 8 8"><path d="M0.8 0.8L7.2 7.2M7.2 0.8L0.8 7.2" stroke="#000" stroke-width="1.5"/></svg>
<div style="left:222.50px;top:321.00px;width:210.50px;height:15.00px;background:#f0f0f0;border-top:1px solid #c8c8c8;border-bottom:1px solid #a0a0a0;box-sizing:border-box"></div>
<div style="left:232.30px;top:322.00px;width:1.00px;height:13.00px;background:#a0a0a0"></div>
<svg style="left:225.00px;top:326.00px;" width="7" height="6" viewBox="0 0 7 6"><path d="M0 0H7L3.5 6Z" fill="#333"/></svg>
<div style="left:233.95px;top:323.67px;height:13px;line-height:13px;font-family:'Liberation Sans',sans-serif;font-size:10px;letter-spacing:-0.863px;color:#222;white-space:pre;">Name</div>
<div style="left:347.30px;top:322.00px;width:1.00px;height:13.00px;background:#a0a0a0"></div>
<div style="left:348.55px;top:323.67px;height:13px;line-height:13px;font-family:'Liberation Sans',sans-serif;font-size:10px;letter-spacing:-0.124px;color:#222;white-space:pre;">Type (filtered)</div>
<div style="left:222.50px;top:336.00px;width:210.50px;height:122.50px;background:#8ca4ff"></div>
<div style="left:222.50px;top:337.50px;width:210.50px;height:14.00px;background:#c2ccd9"></div>
<svg style="left:240.30px;top:338.50px;" width="12" height="12" viewBox="0 0 12 12"><circle cx="6" cy="6" r="5.5" fill="#1a98c8"/><circle cx="5" cy="5" r="4" fill="#38c0e8"/><circle cx="4" cy="3.8" r="1.5" fill="#c8f0ff"/></svg>
<div style="left:256.75px;top:339.07px;height:13px;line-height:13px;font-family:'Liberation Sans',sans-serif;font-size:10px;letter-spacing:-0.096px;color:#111;white-space:pre;">#INITIAL#15</div>
<div style="left:348.55px;top:339.07px;height:13px;line-height:13px;font-family:'Liberation Sans',sans-serif;font-size:10px;letter-spacing:-0.077px;color:#111;white-space:pre;">Initial</div>
<div style="left:222.50px;top:458.50px;width:210.50px;height:4.00px;background:#fafafa"></div>
<div style="left:222.50px;top:462.00px;width:210.50px;height:13.00px;background:#f8f8f8"></div>
<div style="left:222.50px;top:462.00px;width:14.00px;height:12.50px;background:#f0f0f0;border-right:1px solid #a0a0a0;border-bottom:1px solid #a0a0a0;box-sizing:border-box"></div>
<svg style="left:227.50px;top:465.00px;" width="4" height="7" viewBox="0 0 4 7"><path d="M4 0V7L0 3.5Z" fill="#000"/></svg>
<div style="left:236.50px;top:462.00px;width:74.50px;height:12.50px;background:#f0f0f0;border-right:1px solid #a0a0a0;border-bottom:1px solid #a0a0a0;border-left:1px solid #fff;box-sizing:border-box"></div>
<div style="left:419.50px;top:462.00px;width:13.50px;height:12.50px;background:#f0f0f0;border-right:1px solid #a0a0a0;border-bottom:1px solid #a0a0a0;box-sizing:border-box"></div>
<svg style="left:424.50px;top:465.00px;" width="4" height="7" viewBox="0 0 4 7"><path d="M0 0V7L4 3.5Z" fill="#000"/></svg>
<div style="left:220.00px;top:475.00px;width:213.00px;height:1.00px;background:#a0a0a0"></div>
<div style="left:0.00px;top:456.50px;width:214.00px;height:20.00px;background:#f0f0f0"></div>
<div style="left:1.00px;top:458.00px;width:65.00px;height:17.50px;background:#d4d4d4;border:1px solid #707070;border-top:2px solid #707070;border-radius:3px 3px 3px 3px;box-sizing:border-box"></div>
<svg style="left:6.00px;top:459.00px;" width="13" height="15" viewBox="0 0 13 15"><path d="M1 14H12" stroke="#111" stroke-width="1.5"/><rect x="2" y="5" width="2" height="9" fill="#10c080"/><rect x="5" y="1" width="2" height="13" fill="#c01080"/><rect x="8" y="4" width="2" height="10" fill="#30a0f0"/><rect x="10.5" y="6" width="1.8" height="8" fill="#e0d010"/></svg>
<div style="left:21.05px;top:460.37px;height:13px;line-height:13px;font-family:'Liberation Sans',sans-serif;font-size:10px;letter-spacing:-0.230px;color:#222;white-space:pre;">Library</div>
<svg style="left:56.00px;top:463.00px;" width="6" height="6" viewBox="0 0 6 6"><path d="M0.5 0.5L5.5 5.5M5.5 0.5L0.5 5.5" stroke="#bbb" stroke-width="1.2"/></svg>
<div style="left:66.00px;top:458.00px;width:50.50px;height:18.00px;background:#f4f4f4;border:1px solid #707070;border-top:none;border-radius:0 0 3px 3px;box-sizing:border-box"></div>
<svg style="left:70.70px;top:459.00px;" width="14" height="15" viewBox="0 0 14 15"><path d="M4.5 1.5 L12 0.7 L13.5 2.2 L12.8 10 L5.5 10.8Z" fill="#f4f4ff" stroke="#222" stroke-width="0.9"/><path d="M6.5 3.2h4.5M6.6 5h4.5M6.7 6.8h4.5M6.8 8.6h3" stroke="#7080c0" stroke-width="0.8"/><path d="M0.8 2h2.5M0.8 4h2.5M0.8 6h2.5M0.8 8h2.5" stroke="#9aa0e0" stroke-width="0.8" stroke-dasharray="1 0.5"/><circle cx="3.2" cy="12.2" r="2.4" fill="#c80010" stroke="#300" stroke-width="0.6"/><circle cx="12" cy="12.5" r="2.1" fill="#c80010" stroke="#300" stroke-width="0.6"/></svg>
<div style="left:86.85px;top:460.37px;height:13px;line-height:13px;font-family:'Liberation Sans',sans-serif;font-size:10px;letter-spacing:-0.881px;color:#222;white-space:pre;">sim</div>
<svg style="left:106.00px;top:463.00px;" width="6" height="6" viewBox="0 0 6 6"><path d="M0.5 0.5L5.5 5.5M5.5 0.5L0.5 5.5" stroke="#bbb" stroke-width="1.2"/></svg>
<div style="left:116.00px;top:458.50px;width:84.00px;height:1.00px;background:#707070"></div>
<div style="left:200.00px;top:458.00px;width:7.00px;height:13.50px;background:#f0f0f0;border:1px solid #999;box-sizing:border-box"></div>
<div style="left:207.00px;top:458.00px;width:7.00px;height:13.50px;background:#f0f0f0;border:1px solid #999;box-sizing:border-box"></div>
<svg style="left:201.50px;top:461.00px;" width="4" height="7" viewBox="0 0 4 7"><path d="M4 0L0 3.5L4 7" stroke="#888" fill="none"/></svg>
<svg style="left:208.50px;top:461.00px;" width="4" height="7" viewBox="0 0 4 7"><path d="M0 0L4 3.5L0 7" stroke="#888" fill="none"/></svg>
<div style="left:220.00px;top:476.00px;width:213.00px;height:7.00px;background:#d0d0d0"></div>
<div style="left:220.00px;top:456.00px;width:0.00px;height:0.00px;"></div>
<div style="left:441.00px;top:126.00px;width:639.00px;height:331.00px;background:#f0f0f0"></div>
<div style="left:441.50px;top:126.00px;width:1.00px;height:330.00px;background:#c0c0c0"></div>
<div style="left:442.00px;top:128.00px;width:638.00px;height:16.00px;background:#9cb6d6"></div>
<svg style="left:443.50px;top:130.00px;" width="12.5" height="12.5" viewBox="0 0 12.5 12.5"><rect x="0" y="0" width="12.5" height="12.5" fill="#333"/><rect x="0.8" y="0.8" width="11" height="2" fill="#ddd"/><rect x="1" y="3" width="10.5" height="8.5" fill="#000"/><path d="M1.5 9H4V5H6V9H8V6H11" stroke="#10d0a0" stroke-width="1" fill="none"/><rect x="7" y="8.5" width="4" height="2.5" fill="#6010a0"/></svg>
<div style="left:458.85px;top:130.12px;height:13px;line-height:13px;font-family:'Liberation Sans',sans-serif;font-size:10px;letter-spacing:-0.290px;color:#222;white-space:pre;">Wave - Default</div>
<div style="left:526.00px;top:133.00px;width:248.00px;height:1.20px;background:#d0ecfa"></div>
<div style="left:526.00px;top:134.30px;width:248.00px;height:1.50px;background:#3a4858"></div>
<div style="left:793.00px;top:133.00px;width:248.00px;height:1.20px;background:#d0ecfa"></div>
<div style="left:793.00px;top:134.30px;width:248.00px;height:1.50px;background:#3a4858"></div>
<div style="left:526.00px;top:137.00px;width:248.00px;height:1.20px;background:#d0ecfa"></div>
<div style="left:526.00px;top:138.30px;width:248.00px;height:1.50px;background:#3a4858"></div>
<div style="left:793.00px;top:137.00px;width:248.00px;height:1.20px;background:#d0ecfa"></div>
<div style="left:793.00px;top:138.30px;width:248.00px;height:1.50px;background:#3a4858"></div>
<svg style="left:776.00px;top:131.50px;" width="16" height="9" viewBox="0 0 16 9"><path d="M1.5 1.5H16M1.5 7.5H16" stroke="#445" stroke-width="1.1" stroke-dasharray="1.2 1.5"/><path d="M2.5 4.5H16" stroke="#223" stroke-width="1.1" stroke-dasharray="1.2 1.5"/></svg>
<div style="left:1044.00px;top:130.00px;width:11.00px;height:12.00px;background:#f4f4f4;border-right:1px solid #8a9aaa;border-bottom:1px solid #8a9aaa;box-sizing:border-box"></div>
<svg style="left:1045.50px;top:131.50px;" width="8" height="8" viewBox="0 0 8 8"><path d="M4 0.5V7.5M0.5 4H7.5" stroke="#000" stroke-width="1.8"/></svg>
<div style="left:1057.70px;top:130.00px;width:11.00px;height:12.00px;background:#f4f4f4;border-right:1px solid #8a9aaa;border-bottom:1px solid #8a9aaa;box-sizing:border-box"></div>
<svg style="left:1059.20px;top:131.50px;" width="8" height="8" viewBox="0 0 8 8"><rect x="0.7" y="3.2" width="4" height="4" fill="none" stroke="#000" stroke-width="1.2"/><path d="M3 5L7 1M4 0.8H7.2V4" stroke="#000" stroke-width="1.4" fill="none"/></svg>
<div style="left:1071.40px;top:130.00px;width:11.00px;height:12.00px;background:#f4f4f4;border-right:1px solid #8a9aaa;border-bottom:1px solid #8a9aaa;box-sizing:border-box"></div>
<svg style="left:1072.90px;top:131.50px;" width="8" height="8" viewBox="0 0 8 8"><path d="M0.8 0.8L7.2 7.2M7.2 0.8L0.8 7.2" stroke="#000" stroke-width="1.5"/></svg>
<div style="left:442.00px;top:144.00px;width:638.00px;height:1.00px;background:#e8e8e8"></div>
<div style="left:443.00px;top:145.00px;width:135.00px;height:255.00px;background:#808080"></div>
<div style="left:580.30px;top:145.00px;width:85.20px;height:255.00px;background:#808080"></div>
<div style="left:578.00px;top:145.00px;width:2.30px;height:255.00px;background:#fff"></div>
<div style="left:665.50px;top:145.00px;width:2.00px;height:291.00px;background:#fff"></div>
<div style="left:667.50px;top:145.00px;width:399.00px;height:255.00px;background:#000"></div>
<div style="left:443.00px;top:161.30px;width:624.00px;height:2.20px;background:#fff"></div>
<div style="left:443.00px;top:163.50px;width:7.60px;height:236.00px;background:#fff"></div>
<svg style="left:452.00px;top:146.50px;" width="14" height="14" viewBox="0 0 14 14"><path d="M1 5 L6 0.5 L9 3 L4 7.5Z" fill="#b020d0"/><rect x="7" y="6.5" width="6.5" height="6" fill="#10a040"/><circle cx="7.5" cy="5.5" r="3" fill="#10d8f0"/><path d="M0.5 9.5 L5 5 L9.5 9.5 L5 14Z" fill="#1050f0"/></svg>
<svg style="left:469.50px;top:155.00px;" width="4" height="3" viewBox="0 0 4 3"><path d="M0 0H4L2 3Z" fill="#000"/></svg>
<div style="left:639.15px;top:147.72px;height:13px;line-height:13px;font-family:'Liberation Sans',sans-serif;font-size:10px;letter-spacing:-0.802px;color:#e8e8e8;white-space:pre;">Msgs</div>
<svg style="left:467.00px;top:165.80px;" width="13" height="13" viewBox="0 0 13 13"><path d="M6.5 0.5L0.5 6.5L3.6 6.5L6.5 3.6Z" fill="#86d8f8"/><path d="M6.5 0.5L12.5 6.5L9.4 6.5L6.5 3.6Z" fill="#2aa0dc"/><path d="M12.5 6.5L6.5 12.5L6.5 9.4L9.4 6.5Z" fill="#0c64a4"/><path d="M0.5 6.5L6.5 12.5L6.5 9.4L3.6 6.5Z" fill="#1a88c8"/><path d="M6.5 3.6L9.4 6.5L6.5 9.4L3.6 6.5Z" fill="#12c0f2"/></svg>
<div style="left:483.55px;top:166.37px;height:13px;line-height:13px;font-family:'Liberation Sans',sans-serif;font-size:10px;letter-spacing:-0.117px;color:#eeeeee;white-space:pre;">/full_adder_tb/a</div>
<div style="left:581.75px;top:166.37px;height:13px;line-height:13px;font-family:'Liberation Sans',sans-serif;font-size:10px;letter-spacing:-0.398px;color:#eeeeee;white-space:pre;">1'h1</div>
<svg style="left:467.00px;top:180.10px;" width="13" height="13" viewBox="0 0 13 13"><path d="M6.5 0.5L0.5 6.5L3.6 6.5L6.5 3.6Z" fill="#86d8f8"/><path d="M6.5 0.5L12.5 6.5L9.4 6.5L6.5 3.6Z" fill="#2aa0dc"/><path d="M12.5 6.5L6.5 12.5L6.5 9.4L9.4 6.5Z" fill="#0c64a4"/><path d="M0.5 6.5L6.5 12.5L6.5 9.4L3.6 6.5Z" fill="#1a88c8"/><path d="M6.5 3.6L9.4 6.5L6.5 9.4L3.6 6.5Z" fill="#12c0f2"/></svg>
<div style="left:483.55px;top:180.67px;height:13px;line-height:13px;font-family:'Liberation Sans',sans-serif;font-size:10px;letter-spacing:-0.117px;color:#eeeeee;white-space:pre;">/full_adder_tb/b</div>
<div style="left:581.75px;top:180.67px;height:13px;line-height:13px;font-family:'Liberation Sans',sans-serif;font-size:10px;letter-spacing:-0.398px;color:#eeeeee;white-space:pre;">1'h1</div>
<svg style="left:467.00px;top:194.40px;" width="13" height="13" viewBox="0 0 13 13"><path d="M6.5 0.5L0.5 6.5L3.6 6.5L6.5 3.6Z" fill="#86d8f8"/><path d="M6.5 0.5L12.5 6.5L9.4 6.5L6.5 3.6Z" fill="#2aa0dc"/><path d="M12.5 6.5L6.5 12.5L6.5 9.4L9.4 6.5Z" fill="#0c64a4"/><path d="M0.5 6.5L6.5 12.5L6.5 9.4L3.6 6.5Z" fill="#1a88c8"/><path d="M6.5 3.6L9.4 6.5L6.5 9.4L3.6 6.5Z" fill="#12c0f2"/></svg>
<div style="left:483.55px;top:194.97px;height:13px;line-height:13px;font-family:'Liberation Sans',sans-serif;font-size:10px;letter-spacing:-0.351px;color:#eeeeee;white-space:pre;">/full_adder_tb/cin</div>
<div style="left:581.75px;top:194.97px;height:13px;line-height:13px;font-family:'Liberation Sans',sans-serif;font-size:10px;letter-spacing:-0.398px;color:#eeeeee;white-space:pre;">1'h1</div>
<svg style="left:467.00px;top:208.70px;" width="13" height="13" viewBox="0 0 13 13"><path d="M6.5 0.5L0.5 6.5L3.6 6.5L6.5 3.6Z" fill="#86d8f8"/><path d="M6.5 0.5L12.5 6.5L9.4 6.5L6.5 3.6Z" fill="#2aa0dc"/><path d="M12.5 6.5L6.5 12.5L6.5 9.4L9.4 6.5Z" fill="#0c64a4"/><path d="M0.5 6.5L6.5 12.5L6.5 9.4L3.6 6.5Z" fill="#1a88c8"/><path d="M6.5 3.6L9.4 6.5L6.5 9.4L3.6 6.5Z" fill="#12c0f2"/></svg>
<div style="left:483.55px;top:209.27px;height:13px;line-height:13px;font-family:'Liberation Sans',sans-serif;font-size:10px;letter-spacing:-0.417px;color:#eeeeee;white-space:pre;">/full_adder_tb/sum</div>
<div style="left:581.75px;top:209.27px;height:13px;line-height:13px;font-family:'Liberation Sans',sans-serif;font-size:10px;letter-spacing:-0.398px;color:#eeeeee;white-space:pre;">1'h1</div>
<svg style="left:467.00px;top:223.00px;" width="13" height="13" viewBox="0 0 13 13"><path d="M6.5 0.5L0.5 6.5L3.6 6.5L6.5 3.6Z" fill="#86d8f8"/><path d="M6.5 0.5L12.5 6.5L9.4 6.5L6.5 3.6Z" fill="#2aa0dc"/><path d="M12.5 6.5L6.5 12.5L6.5 9.4L9.4 6.5Z" fill="#0c64a4"/><path d="M0.5 6.5L6.5 12.5L6.5 9.4L3.6 6.5Z" fill="#1a88c8"/><path d="M6.5 3.6L9.4 6.5L6.5 9.4L3.6 6.5Z" fill="#12c0f2"/></svg>
<div style="left:483.55px;top:223.57px;height:13px;line-height:13px;font-family:'Liberation Sans',sans-serif;font-size:10px;letter-spacing:-0.227px;color:#eeeeee;white-space:pre;">/full_adder_tb/cout</div>
<div style="left:581.75px;top:223.57px;height:13px;line-height:13px;font-family:'Liberation Sans',sans-serif;font-size:10px;letter-spacing:-0.398px;color:#eeeeee;white-space:pre;">1'h1</div>
<div style="left:452.00px;top:236.80px;width:122.50px;height:1.20px;background:#111"></div>
<svg style="left:451.00px;top:234.00px;" width="5" height="6" viewBox="0 0 5 6"><path d="M0.5 0.5L4.5 3L0.5 5.5Z" fill="none" stroke="#111" stroke-width="0.8"/></svg>
<div style="left:582.00px;top:236.80px;width:79.50px;height:1.20px;background:#111"></div>
<svg style="left:667.50px;top:163.50px;" width="399" height="236" viewBox="0 0 399 236"><line x1="78.0" y1="0" x2="78.0" y2="237" stroke="#7a7a7a" stroke-width="1"/><line x1="153.0" y1="0" x2="153.0" y2="237" stroke="#7a7a7a" stroke-width="1"/><line x1="228.0" y1="0" x2="228.0" y2="237" stroke="#7a7a7a" stroke-width="1"/><line x1="302.0" y1="0" x2="302.0" y2="237" stroke="#7a7a7a" stroke-width="1"/><line x1="377.0" y1="0" x2="377.0" y2="237" stroke="#7a7a7a" stroke-width="1"/><path d="M670.6 177.1H745.4V166.9H820.2V177.1H895.0V166.9H969.8H1044.6" transform="translate(-667.5 -163.5)" stroke="#1ec21e" stroke-width="1.3" fill="none"/><path d="M670.6 191.7H745.4H820.2V181.5H895.0H969.8H1044.6" transform="translate(-667.5 -163.5)" stroke="#1ec21e" stroke-width="1.3" fill="none"/><path d="M670.6 206.0H745.4H820.2V195.8H895.0V206.0H969.8V195.8H1044.6" transform="translate(-667.5 -163.5)" stroke="#1ec21e" stroke-width="1.3" fill="none"/><path d="M670.6 220.3H745.4V210.1H820.2V220.3H895.0H969.8V210.1H1044.6" transform="translate(-667.5 -163.5)" stroke="#1ec21e" stroke-width="1.3" fill="none"/><path d="M670.6 234.8H745.4H820.2V224.6H895.0H969.8H1044.6" transform="translate(-667.5 -163.5)" stroke="#1ec21e" stroke-width="1.3" fill="none"/><line x1="3" y1="0" x2="3" y2="236" stroke="#30b030" stroke-width="1"/></svg>
<div style="left:670.00px;top:146.00px;width:1.00px;height:15.00px;background:#30b030"></div>
<div style="left:670.20px;top:172.10px;width:1.00px;height:5.00px;background:#a02040"></div>
<div style="left:670.20px;top:186.70px;width:1.00px;height:5.00px;background:#a02040"></div>
<div style="left:670.20px;top:201.00px;width:1.00px;height:5.00px;background:#a02040"></div>
<div style="left:670.20px;top:215.30px;width:1.00px;height:5.00px;background:#a02040"></div>
<div style="left:670.20px;top:229.80px;width:1.00px;height:5.00px;background:#a02040"></div>
<div style="left:1067.50px;top:145.00px;width:12.50px;height:16.30px;background:#888"></div>
<div style="left:1066.50px;top:145.00px;width:2.00px;height:291.00px;background:#fff"></div>
<div style="left:1068.50px;top:163.50px;width:11.50px;height:236.00px;background:#f4f4f4"></div>
<div style="left:1069.50px;top:164.00px;width:10.50px;height:12.50px;background:#f0f0f0;border-right:1px solid #a0a0a0;border-bottom:1px solid #a0a0a0;border-left:1px solid #fff;border-top:1px solid #fff;box-sizing:border-box"></div>
<svg style="left:1072.50px;top:168.00px;" width="6" height="4" viewBox="0 0 6 4"><path d="M0 4H6L3 0Z" fill="#000"/></svg>
<div style="left:1069.50px;top:386.50px;width:10.50px;height:12.50px;background:#f0f0f0;border-right:1px solid #a0a0a0;border-bottom:1px solid #a0a0a0;border-left:1px solid #fff;border-top:1px solid #fff;box-sizing:border-box"></div>
<svg style="left:1072.50px;top:391.00px;" width="6" height="4" viewBox="0 0 6 4"><path d="M0 0H6L3 4Z" fill="#000"/></svg>
<div style="left:443.00px;top:400.00px;width:624.00px;height:2.00px;background:#fff"></div>
<div style="left:443.00px;top:402.00px;width:135.00px;height:34.00px;background:#808080"></div>
<div style="left:481.00px;top:402.00px;width:97.00px;height:19.00px;background:#fff"></div>
<div style="left:580.30px;top:402.00px;width:85.20px;height:19.00px;background:#fff"></div>
<div style="left:580.30px;top:421.00px;width:85.20px;height:15.00px;background:#808080"></div>
<div style="left:551.15px;top:405.67px;height:13px;line-height:13px;font-family:'Liberation Sans',sans-serif;font-size:10px;letter-spacing:-0.758px;color:#222;white-space:pre;">Now</div>
<div style="left:629.55px;top:405.67px;height:13px;line-height:13px;font-family:'Liberation Sans',sans-serif;font-size:10px;letter-spacing:-0.426px;color:#222;white-space:pre;">250 ns</div>
<div style="left:534.25px;top:423.07px;height:13px;line-height:13px;font-family:'Liberation Sans',sans-serif;font-size:10px;letter-spacing:-0.351px;color:#e0e0e0;white-space:pre;">Cursor 1</div>
<div style="left:626.15px;top:423.07px;height:13px;line-height:13px;font-family:'Liberation Sans',sans-serif;font-size:10px;letter-spacing:-0.252px;color:#e8e8e8;white-space:pre;">0.00 ns</div>
<svg style="left:451.00px;top:405.00px;" width="30" height="14" viewBox="0 0 30 14"><path d="M1 9 L3 4 L6 4 L8 9Z" fill="#8090a8"/><rect x="1" y="9" width="8" height="2" fill="#6080b0"/><rect x="10" y="3" width="9" height="8" fill="#6aa0e0" stroke="#3060b0" stroke-width="0.6"/><path d="M11 5h7M11 7h7" stroke="#dde" stroke-width="0.6"/><circle cx="24.5" cy="7" r="4.5" fill="#40c040"/><path d="M22 7H27M24.5 4.5V9.5" stroke="#fff" stroke-width="1"/></svg>
<svg style="left:453.00px;top:423.00px;" width="30" height="14" viewBox="0 0 30 14"><rect x="0.5" y="6" width="9" height="7" fill="#e8b830" stroke="#b08010" stroke-width="0.6"/><path d="M2.5 6 V3.5 C2.5 1 7.5 1 7.5 3.5" stroke="#a0a0a0" stroke-width="1.2" fill="none"/><path d="M11 11 L16 5 M15 3 C16 1 19 1 18.5 3.5 L16.5 5" stroke="#3070d0" stroke-width="1.8" fill="none"/><circle cx="24" cy="6" r="4.5" fill="#e03030"/><path d="M21.5 6H26.5" stroke="#fff" stroke-width="1.1"/></svg>
<div style="left:667.50px;top:402.00px;width:399.00px;height:34.00px;background:#000"></div>
<svg style="left:667.50px;top:402.00px;" width="399" height="34" viewBox="0 0 399 34"><line x1="3.1" y1="0.3" x2="3.1" y2="6.2" stroke="#20c020" stroke-width="1.2"/><line x1="10.6" y1="2.9" x2="10.6" y2="6.2" stroke="#20c020" stroke-width="1.1"/><line x1="18.1" y1="2.9" x2="18.1" y2="6.2" stroke="#20c020" stroke-width="1.1"/><line x1="25.5" y1="2.9" x2="25.5" y2="6.2" stroke="#20c020" stroke-width="1.1"/><line x1="33.0" y1="2.9" x2="33.0" y2="6.2" stroke="#20c020" stroke-width="1.1"/><line x1="40.5" y1="0.3" x2="40.5" y2="6.2" stroke="#20c020" stroke-width="1.2"/><line x1="48.0" y1="2.9" x2="48.0" y2="6.2" stroke="#20c020" stroke-width="1.1"/><line x1="55.5" y1="2.9" x2="55.5" y2="6.2" stroke="#20c020" stroke-width="1.1"/><line x1="62.9" y1="2.9" x2="62.9" y2="6.2" stroke="#20c020" stroke-width="1.1"/><line x1="70.4" y1="2.9" x2="70.4" y2="6.2" stroke="#20c020" stroke-width="1.1"/><line x1="77.9" y1="0.3" x2="77.9" y2="6.2" stroke="#20c020" stroke-width="1.2"/><line x1="85.4" y1="2.9" x2="85.4" y2="6.2" stroke="#20c020" stroke-width="1.1"/><line x1="92.9" y1="2.9" x2="92.9" y2="6.2" stroke="#20c020" stroke-width="1.1"/><line x1="100.3" y1="2.9" x2="100.3" y2="6.2" stroke="#20c020" stroke-width="1.1"/><line x1="107.8" y1="2.9" x2="107.8" y2="6.2" stroke="#20c020" stroke-width="1.1"/><line x1="115.3" y1="0.3" x2="115.3" y2="6.2" stroke="#20c020" stroke-width="1.2"/><line x1="122.8" y1="2.9" x2="122.8" y2="6.2" stroke="#20c020" stroke-width="1.1"/><line x1="130.3" y1="2.9" x2="130.3" y2="6.2" stroke="#20c020" stroke-width="1.1"/><line x1="137.7" y1="2.9" x2="137.7" y2="6.2" stroke="#20c020" stroke-width="1.1"/><line x1="145.2" y1="2.9" x2="145.2" y2="6.2" stroke="#20c020" stroke-width="1.1"/><line x1="152.7" y1="0.3" x2="152.7" y2="6.2" stroke="#20c020" stroke-width="1.2"/><line x1="160.2" y1="2.9" x2="160.2" y2="6.2" stroke="#20c020" stroke-width="1.1"/><line x1="167.7" y1="2.9" x2="167.7" y2="6.2" stroke="#20c020" stroke-width="1.1"/><line x1="175.1" y1="2.9" x2="175.1" y2="6.2" stroke="#20c020" stroke-width="1.1"/><line x1="182.6" y1="2.9" x2="182.6" y2="6.2" stroke="#20c020" stroke-width="1.1"/><line x1="190.1" y1="0.3" x2="190.1" y2="6.2" stroke="#20c020" stroke-width="1.2"/><line x1="197.6" y1="2.9" x2="197.6" y2="6.2" stroke="#20c020" stroke-width="1.1"/><line x1="205.1" y1="2.9" x2="205.1" y2="6.2" stroke="#20c020" stroke-width="1.1"/><line x1="212.5" y1="2.9" x2="212.5" y2="6.2" stroke="#20c020" stroke-width="1.1"/><line x1="220.0" y1="2.9" x2="220.0" y2="6.2" stroke="#20c020" stroke-width="1.1"/><line x1="227.5" y1="0.3" x2="227.5" y2="6.2" stroke="#20c020" stroke-width="1.2"/><line x1="235.0" y1="2.9" x2="235.0" y2="6.2" stroke="#20c020" stroke-width="1.1"/><line x1="242.5" y1="2.9" x2="242.5" y2="6.2" stroke="#20c020" stroke-width="1.1"/><line x1="249.9" y1="2.9" x2="249.9" y2="6.2" stroke="#20c020" stroke-width="1.1"/><line x1="257.4" y1="2.9" x2="257.4" y2="6.2" stroke="#20c020" stroke-width="1.1"/><line x1="264.9" y1="0.3" x2="264.9" y2="6.2" stroke="#20c020" stroke-width="1.2"/><line x1="272.4" y1="2.9" x2="272.4" y2="6.2" stroke="#20c020" stroke-width="1.1"/><line x1="279.9" y1="2.9" x2="279.9" y2="6.2" stroke="#20c020" stroke-width="1.1"/><line x1="287.3" y1="2.9" x2="287.3" y2="6.2" stroke="#20c020" stroke-width="1.1"/><line x1="294.8" y1="2.9" x2="294.8" y2="6.2" stroke="#20c020" stroke-width="1.1"/><line x1="302.3" y1="0.3" x2="302.3" y2="6.2" stroke="#20c020" stroke-width="1.2"/><line x1="309.8" y1="2.9" x2="309.8" y2="6.2" stroke="#20c020" stroke-width="1.1"/><line x1="317.3" y1="2.9" x2="317.3" y2="6.2" stroke="#20c020" stroke-width="1.1"/><line x1="324.7" y1="2.9" x2="324.7" y2="6.2" stroke="#20c020" stroke-width="1.1"/><line x1="332.2" y1="2.9" x2="332.2" y2="6.2" stroke="#20c020" stroke-width="1.1"/><line x1="339.7" y1="0.3" x2="339.7" y2="6.2" stroke="#20c020" stroke-width="1.2"/><line x1="347.2" y1="2.9" x2="347.2" y2="6.2" stroke="#20c020" stroke-width="1.1"/><line x1="354.7" y1="2.9" x2="354.7" y2="6.2" stroke="#20c020" stroke-width="1.1"/><line x1="362.1" y1="2.9" x2="362.1" y2="6.2" stroke="#20c020" stroke-width="1.1"/><line x1="369.6" y1="2.9" x2="369.6" y2="6.2" stroke="#20c020" stroke-width="1.1"/><line x1="377.1" y1="0.3" x2="377.1" y2="6.2" stroke="#20c020" stroke-width="1.2"/><line x1="384.6" y1="2.9" x2="384.6" y2="6.2" stroke="#20c020" stroke-width="1.1"/><line x1="392.1" y1="2.9" x2="392.1" y2="6.2" stroke="#20c020" stroke-width="1.1"/><line x1="3" y1="19.1" x2="397" y2="19.1" stroke="#8a8a8a" stroke-width="1"/><line x1="3" y1="0" x2="3" y2="19" stroke="#e0a000" stroke-width="1"/></svg>
<div style="left:734.25px;top:409.87px;height:13px;line-height:13px;font-family:'Liberation Sans',sans-serif;font-size:10px;letter-spacing:-0.542px;color:#20c020;white-space:pre;">50 ns</div>
<div style="left:806.50px;top:409.87px;height:13px;line-height:13px;font-family:'Liberation Sans',sans-serif;font-size:10px;letter-spacing:-0.526px;color:#20c020;white-space:pre;">100 ns</div>
<div style="left:881.30px;top:409.87px;height:13px;line-height:13px;font-family:'Liberation Sans',sans-serif;font-size:10px;letter-spacing:-0.526px;color:#20c020;white-space:pre;">150 ns</div>
<div style="left:956.10px;top:409.87px;height:13px;line-height:13px;font-family:'Liberation Sans',sans-serif;font-size:10px;letter-spacing:-0.526px;color:#20c020;white-space:pre;">200 ns</div>
<div style="left:1030.90px;top:409.87px;height:13px;line-height:13px;font-family:'Liberation Sans',sans-serif;font-size:10px;letter-spacing:-0.526px;color:#20c020;white-space:pre;">250 ns</div>
<div style="left:667.75px;top:409.87px;height:13px;line-height:13px;font-family:'Liberation Sans',sans-serif;font-size:10px;letter-spacing:-0.535px;color:#20c020;white-space:pre;clip-path:inset(0 0 0 2.8px)">0 ns</div>
<div style="left:671.00px;top:422.30px;width:35.00px;height:13.50px;border:1px solid #d0a000;box-sizing:border-box"></div>
<div style="left:672.55px;top:423.67px;height:13px;line-height:13px;font-family:'Liberation Sans',sans-serif;font-size:10px;letter-spacing:-0.352px;color:#e0b000;white-space:pre;">0.00 ns</div>
<div style="left:1068.50px;top:402.00px;width:11.50px;height:34.00px;background:#909090"></div>
<div style="left:443.00px;top:436.00px;width:637.00px;height:2.00px;background:#fff"></div>
<div style="left:443.00px;top:438.00px;width:135.00px;height:16.00px;background:#808080"></div>
<div style="left:450.50px;top:439.00px;width:127.50px;height:14.50px;background:#f8f8f8"></div>
<div style="left:450.50px;top:439.00px;width:13.50px;height:14.50px;background:#f0f0f0;border-right:1px solid #a0a0a0;border-bottom:1px solid #a0a0a0;box-sizing:border-box"></div>
<svg style="left:455.00px;top:443.00px;" width="4" height="7" viewBox="0 0 4 7"><path d="M4 0V7L0 3.5Z" fill="#bbb"/></svg>
<div style="left:563.50px;top:439.00px;width:14.00px;height:14.50px;background:#f0f0f0;border-right:1px solid #a0a0a0;border-bottom:1px solid #a0a0a0;box-sizing:border-box"></div>
<svg style="left:568.00px;top:443.00px;" width="4" height="7" viewBox="0 0 4 7"><path d="M0 0V7L4 3.5Z" fill="#bbb"/></svg>
<div style="left:580.30px;top:438.00px;width:85.20px;height:16.00px;background:#808080"></div>
<div style="left:580.30px;top:439.00px;width:85.20px;height:14.50px;background:#f8f8f8"></div>
<div style="left:580.30px;top:439.00px;width:14.00px;height:14.50px;background:#f0f0f0;border-right:1px solid #a0a0a0;border-bottom:1px solid #a0a0a0;box-sizing:border-box"></div>
<svg style="left:585.00px;top:443.00px;" width="4" height="7" viewBox="0 0 4 7"><path d="M4 0V7L0 3.5Z" fill="#bbb"/></svg>
<div style="left:651.00px;top:439.00px;width:14.50px;height:14.50px;background:#f0f0f0;border-right:1px solid #a0a0a0;border-bottom:1px solid #a0a0a0;box-sizing:border-box"></div>
<svg style="left:656.00px;top:443.00px;" width="4" height="7" viewBox="0 0 4 7"><path d="M0 0V7L4 3.5Z" fill="#bbb"/></svg>
<div style="left:667.50px;top:438.00px;width:412.50px;height:16.00px;background:#808080"></div>
<div style="left:668.50px;top:439.00px;width:396.00px;height:14.50px;background:#f4f4f4"></div>
<div style="left:668.50px;top:439.00px;width:12.50px;height:14.50px;background:#f0f0f0;border-right:1px solid #a0a0a0;border-bottom:1px solid #a0a0a0;border-left:1px solid #fff;border-top:1px solid #fff;box-sizing:border-box"></div>
<svg style="left:672.50px;top:443.00px;" width="4" height="7" viewBox="0 0 4 7"><path d="M4 0V7L0 3.5Z" fill="#000"/></svg>
<div style="left:1051.50px;top:439.00px;width:13.00px;height:14.50px;background:#f0f0f0;border-right:1px solid #a0a0a0;border-bottom:1px solid #a0a0a0;border-left:1px solid #fff;border-top:1px solid #fff;box-sizing:border-box"></div>
<svg style="left:1056.00px;top:443.00px;" width="4" height="7" viewBox="0 0 4 7"><path d="M0 0V7L4 3.5Z" fill="#000"/></svg>
<div style="left:1068.50px;top:438.50px;width:11.50px;height:15.00px;background:#909090"></div>
<div style="left:442.00px;top:454.00px;width:638.00px;height:1.00px;background:#a0a0a0"></div>
<div style="left:441.00px;top:455.00px;width:639.00px;height:22.00px;background:#f0f0f0"></div>
<div style="left:441.00px;top:457.50px;width:60.00px;height:18.50px;background:#f4f4f4;border:1px solid #707070;border-top:none;border-radius:0 0 3px 3px;box-sizing:border-box"></div>
<svg style="left:445.30px;top:459.00px;" width="12.5" height="13" viewBox="0 0 12.5 13"><rect x="0" y="0" width="12.5" height="13" fill="#333"/><rect x="1" y="2.5" width="10.5" height="9.5" fill="#000"/><path d="M1.5 9H4V5H6V9H8V6H11" stroke="#10d0a0" stroke-width="1" fill="none"/><rect x="7" y="8.5" width="4" height="2.5" fill="#6010a0"/></svg>
<div style="left:460.45px;top:459.77px;height:13px;line-height:13px;font-family:'Liberation Sans',sans-serif;font-size:10px;letter-spacing:-0.201px;color:#222;white-space:pre;">Wave</div>
<svg style="left:491.00px;top:464.00px;" width="6" height="6" viewBox="0 0 6 6"><path d="M0.5 0.5L5.5 5.5M5.5 0.5L0.5 5.5" stroke="#bbb" stroke-width="1.2"/></svg>
<div style="left:501.50px;top:458.00px;width:100.50px;height:17.50px;background:#d4d4d4;border:1px solid #707070;border-top:2px solid #707070;border-radius:3px;box-sizing:border-box"></div>
<svg style="left:506.00px;top:459.00px;" width="13" height="15" viewBox="0 0 13 15"><path d="M2 1 L12 0.5 L11 13 L1 13.5Z" fill="#b8dcf0" stroke="#80a0b8" stroke-width="0.8"/><path d="M2 1 C4 0 4 2 6 1 C8 0 8 2 10 1" stroke="#666" stroke-width="0.6" fill="none"/><path d="M11 13 L13 12" stroke="#e0d090"/></svg>
<div style="left:521.55px;top:459.77px;height:13px;line-height:13px;font-family:'Liberation Sans',sans-serif;font-size:10px;letter-spacing:-0.122px;color:#222;white-space:pre;">full_adder_tb.v</div>
<svg style="left:591.50px;top:464.00px;" width="6" height="6" viewBox="0 0 6 6"><path d="M0.5 0.5L5.5 5.5M5.5 0.5L0.5 5.5" stroke="#bbb" stroke-width="1.2"/></svg>
<div style="left:602.00px;top:458.50px;width:465.50px;height:1.00px;background:#707070"></div>
<div style="left:1069.00px;top:458.00px;width:5.50px;height:13.00px;background:#f0f0f0;border:1px solid #999;box-sizing:border-box"></div>
<div style="left:1074.50px;top:458.00px;width:5.50px;height:13.00px;background:#f0f0f0;border:1px solid #999;box-sizing:border-box"></div>
<svg style="left:1070.50px;top:461.00px;" width="3" height="7" viewBox="0 0 3 7"><path d="M3 0L0 3.5L3 7" stroke="#888" fill="none"/></svg>
<div style="left:0.00px;top:476.00px;width:1080.00px;height:7.00px;background:#d0d0d0"></div>
<div style="left:0.00px;top:483.00px;width:1080.00px;height:52.00px;background:#f0f0f0"></div>
<div style="left:0.00px;top:482.50px;width:1080.00px;height:1.00px;background:#fafafa"></div>
<svg style="left:3.50px;top:485.00px;" width="12" height="12" viewBox="0 0 12 12"><path d="M1 12 V6 C1 0 11 0 11 6 V12 H9 V6.5 C9 3 3 3 3 6.5 V12Z" fill="#888" stroke="#555" stroke-width="0.6"/><path d="M2 6 C2 1.5 10 1.5 10 6" stroke="#ddd" stroke-width="0.8" fill="none"/></svg>
<div style="left:18.55px;top:485.27px;height:13px;line-height:13px;font-family:'Liberation Sans',sans-serif;font-size:10px;letter-spacing:-0.277px;color:#222;white-space:pre;">Transcript</div>
<div style="left:65.00px;top:487.60px;width:478.00px;height:1.00px;background:#ffffff"></div>
<div style="left:65.00px;top:488.60px;width:478.00px;height:1.30px;background:#a0a0a0"></div>
<div style="left:562.00px;top:487.60px;width:479.00px;height:1.00px;background:#ffffff"></div>
<div style="left:562.00px;top:488.60px;width:479.00px;height:1.30px;background:#a0a0a0"></div>
<div style="left:1040.00px;top:486.60px;width:1.20px;height:2.30px;background:#a0a0a0"></div>
<div style="left:65.00px;top:491.70px;width:478.00px;height:1.00px;background:#ffffff"></div>
<div style="left:65.00px;top:492.70px;width:478.00px;height:1.30px;background:#a0a0a0"></div>
<div style="left:562.00px;top:491.70px;width:479.00px;height:1.00px;background:#ffffff"></div>
<div style="left:562.00px;top:492.70px;width:479.00px;height:1.30px;background:#a0a0a0"></div>
<div style="left:1040.00px;top:490.70px;width:1.20px;height:2.30px;background:#a0a0a0"></div>
<svg style="left:545.00px;top:487.10px;" width="15" height="9" viewBox="0 0 15 9"><path d="M0.5 1H15M0.5 7H15" stroke="#999" stroke-width="1.2" stroke-dasharray="1.2 1.3"/><path d="M1.5 4H15" stroke="#666" stroke-width="1.1" stroke-dasharray="1.2 1.3"/></svg>
<div style="left:1044.00px;top:486.00px;width:11.00px;height:11.00px;background:#f4f4f4;border-right:1px solid #9a9a9a;border-bottom:1px solid #9a9a9a;box-sizing:border-box"></div>
<svg style="left:1045.50px;top:487.50px;" width="8" height="8" viewBox="0 0 8 8"><path d="M4 0.5V7.5M0.5 4H7.5" stroke="#000" stroke-width="1.8"/></svg>
<div style="left:1057.60px;top:486.00px;width:11.00px;height:11.00px;background:#f4f4f4;border-right:1px solid #9a9a9a;border-bottom:1px solid #9a9a9a;box-sizing:border-box"></div>
<svg style="left:1059.10px;top:487.50px;" width="8" height="8" viewBox="0 0 8 8"><rect x="0.7" y="3.2" width="4" height="4" fill="none" stroke="#000" stroke-width="1.2"/><path d="M3 5L7 1M4 0.8H7.2V4" stroke="#000" stroke-width="1.4" fill="none"/></svg>
<div style="left:1071.20px;top:486.00px;width:11.00px;height:11.00px;background:#f4f4f4;border-right:1px solid #9a9a9a;border-bottom:1px solid #9a9a9a;box-sizing:border-box"></div>
<svg style="left:1072.70px;top:487.50px;" width="8" height="8" viewBox="0 0 8 8"><path d="M0.8 0.8L7.2 7.2M7.2 0.8L0.8 7.2" stroke="#000" stroke-width="1.5"/></svg>
<div style="left:4.50px;top:498.50px;width:1063.50px;height:37.00px;background:#fff;border-top:1.5px solid #222;border-left:1.5px solid #222;box-sizing:border-box"></div>
<div style="left:6.85px;top:500.33px;height:13px;line-height:13px;font-family:'Liberation Mono',sans-serif;font-size:9.9px;letter-spacing:0.000px;color:#2a2aff;white-space:pre;"># ** Note: $stop    : C:/Users/dongl/Desktop/adder/full_adder_tb.v(22)</div>
<div style="left:6.85px;top:513.03px;height:13px;line-height:13px;font-family:'Liberation Mono',sans-serif;font-size:9.9px;letter-spacing:0.000px;color:#2a2aff;white-space:pre;">#    Time: 250 ns  Iteration: 0  Instance: /full_adder_tb</div>
<div style="left:6.85px;top:525.73px;height:13px;line-height:13px;font-family:'Liberation Mono',sans-serif;font-size:9.9px;letter-spacing:0.000px;color:#3aa03a;white-space:pre;"># Break in Module full_adder_tb at C:/Users/dongl/Desktop/adder/full_adder_tb.v line 22</div>
<div style="left:1068.00px;top:498.50px;width:12.00px;height:37.00px;background:#f4f4f4"></div>
<div style="left:1069.00px;top:500.00px;width:11.00px;height:12.00px;background:#f0f0f0;border-right:1px solid #a0a0a0;border-bottom:1px solid #a0a0a0;border-left:1px solid #fff;box-sizing:border-box"></div>
<svg style="left:1072.00px;top:504.00px;" width="6" height="4" viewBox="0 0 6 4"><path d="M0 4H6L3 0Z" fill="#aaa"/></svg>
<div style="left:0.00px;top:535.00px;width:1080.00px;height:34.00px;background:#efefef"></div>
<svg style="left:7.00px;top:545.00px;" width="14" height="14" viewBox="0 0 14 14"><path d="M0 1.8L5.8 1V6.6H0Z M6.6 0.9L14 0V6.6H6.6Z M0 7.4H5.8V13L0 12.2Z M6.6 7.4H14V14L6.6 13.1Z" fill="#111"/></svg>
<div style="left:35.50px;top:535.50px;width:242.50px;height:33.50px;background:#fff;border-left:1px solid #ccc;border-top:1px solid #ddd;box-sizing:border-box"></div>
<svg style="left:44.50px;top:545.00px;" width="14" height="14" viewBox="0 0 14 14"><circle cx="8.5" cy="5.5" r="4.6" fill="none" stroke="#222" stroke-width="1.2"/><path d="M5.2 8.8L0.8 13.2" stroke="#222" stroke-width="1.3"/></svg>
<svg style="left:68.00px;top:546.00px;" width="28" height="14" viewBox="0 0 28 14"><g stroke="#333" stroke-width="1.1" fill="none"><path d="M0.5 4.5H4.5M2.5 1V12.5L1 11.5M0.5 9L4.5 7"/><path d="M6 1.5H12V5H6ZM5.5 6.5H12.5M9 1.5V8M6 8.5H12L7 13M7 9.5L12.5 13"/><path d="M21 0.5V2.5M15 2.5H27M17.5 4.5H24.5M17 6.5C19 7 20 6 21 5.5M15 9H27M21 9V13L19.5 12.5M18 10.5L15.5 12.5M24 10.5L26.5 12.5M19 7L23 6.5"/></g></svg>
<svg style="left:291.00px;top:545.00px;" width="16" height="14" viewBox="0 0 16 14"><rect x="3.5" y="2.5" width="9" height="9" fill="none" stroke="#333" stroke-width="1"/><path d="M0.5 0.5H15.5M0.5 13.5H15.5" stroke="#333" stroke-width="1"/><path d="M15 4v2M15 8v2" stroke="#333"/></svg>
<svg style="left:332.50px;top:543.50px;" width="20" height="19" viewBox="0 0 20 19"><defs><linearGradient id="eg" x1="0" y1="0" x2="1" y2="1"><stop offset="0" stop-color="#30d060"/><stop offset="0.5" stop-color="#10a0e0"/><stop offset="1" stop-color="#0a50b0"/></linearGradient></defs><circle cx="10" cy="9.5" r="9.5" fill="url(#eg)"/><path d="M4.5 12 C4 6 14 5 15 10 H7.5 C8 14 13 15 16.5 13.5 C14 18 6 18 4.5 12Z" fill="#fff"/><path d="M7.5 10 C8 7.5 12.5 7.5 12.5 10Z" fill="#10a0e0"/></svg>
<div style="left:326.00px;top:567.30px;width:34.00px;height:1.70px;background:#0078d7"></div>
<svg style="left:377.00px;top:546.00px;" width="16" height="16" viewBox="0 0 16 16"><g transform="translate(8 8)"><circle r="5" fill="#333"/><path d="M0 -7.5V7.5M-7.5 0H7.5M-5.3 -5.3L5.3 5.3M5.3 -5.3L-5.3 5.3" stroke="#333" stroke-width="2.6"/><circle r="2.3" fill="#eee"/></g></svg>
<div style="left:368.00px;top:567.30px;width:35.00px;height:1.70px;background:#0078d7"></div>
<svg style="left:417.00px;top:543.50px;" width="22" height="19" viewBox="0 0 22 19"><circle cx="9.5" cy="9.5" r="9" fill="#1a7ad8"/><path d="M2 8 C6 4 12 4 17 9 L14 13 C11 10 6 9 2 12Z" fill="#fff"/><rect x="13" y="10" width="8.5" height="8.5" rx="1.5" fill="#0a4aa8"/></svg>
<div style="left:410.70px;top:567.30px;width:34.30px;height:1.70px;background:#0078d7"></div>
<svg style="left:463.00px;top:544.00px;" width="15" height="18" viewBox="0 0 15 18"><path d="M0.5 0.5H10L14.5 5V17.5H0.5Z" fill="#fafafa" stroke="#aaa" stroke-width="0.8"/><path d="M10 0.5V5H14.5" fill="#ddd" stroke="#aaa" stroke-width="0.8"/></svg>
<div style="left:453.50px;top:567.30px;width:34.20px;height:1.70px;background:#0078d7"></div>
<svg style="left:506.00px;top:543.00px;" width="13" height="20" viewBox="0 0 13 20"><path d="M12.5 0.5 C6 3 2 9 2.5 15 L1 19.5 L3.5 15.5 C9 13 12 7 12.5 0.5Z" fill="#4a5a7a"/><path d="M12 1 L3 15" stroke="#aab" stroke-width="0.6"/></svg>
<div style="left:495.70px;top:567.30px;width:34.30px;height:1.70px;background:#0078d7"></div>
<div style="left:534.50px;top:535.00px;width:41.30px;height:34.00px;background:#f8f8f8"></div>
<svg style="left:546.00px;top:544.00px;" width="18" height="19" viewBox="0 0 18 19"><ellipse cx="9" cy="10" rx="6.5" ry="8" fill="#111"/><ellipse cx="9" cy="12" rx="4.5" ry="5.5" fill="#fff"/><circle cx="7" cy="6" r="1.3" fill="#fff"/><circle cx="11" cy="6" r="1.3" fill="#fff"/><ellipse cx="9" cy="8.5" rx="3" ry="1.2" fill="#f0b000"/><path d="M4 11 C7 12.5 11 12.5 14 11 L14 13 C11 14 7 14 4 13Z" fill="#e02020"/><ellipse cx="5" cy="18" rx="3" ry="1.2" fill="#f0b000"/><ellipse cx="13" cy="18" rx="3" ry="1.2" fill="#f0b000"/></svg>
<div style="left:534.50px;top:567.30px;width:41.30px;height:1.70px;background:#0078d7"></div>
<svg style="left:826.00px;top:545.00px;" width="17" height="16" viewBox="0 0 17 16"><circle cx="8.5" cy="8" r="8" fill="#1a8ae8"/><path d="M5.5 6 C5.5 2.5 11.5 2.5 11.5 6 C11.5 8 8.7 8.3 8.7 10.5" stroke="#fff" stroke-width="2" fill="none"/><circle cx="8.7" cy="13" r="1.2" fill="#fff"/></svg>
<svg style="left:853.00px;top:548.00px;" width="12" height="7" viewBox="0 0 12 7"><path d="M0.5 6.5L6 1L11.5 6.5" stroke="#333" stroke-width="1.1" fill="none"/></svg>
<svg style="left:872.50px;top:548.00px;" width="15" height="10" viewBox="0 0 15 10"><path d="M3 9.5 C0 9.5 0 5.5 3 5.5 C3 2 8 0 10 3.5 C13 3 15 5 14 8 C14 9 13.5 9.5 12.5 9.5Z" fill="#eee" stroke="#333" stroke-width="1"/></svg>
<svg style="left:893.00px;top:546.00px;" width="14" height="12" viewBox="0 0 14 12"><rect x="3.5" y="3.5" width="10" height="7" fill="none" stroke="#333" stroke-width="1"/><path d="M0.5 5V9M2 2L2 0.5" stroke="#333"/><rect x="0" y="4" width="3" height="5" fill="#555"/></svg>
<svg style="left:915.00px;top:546.00px;" width="12" height="12" viewBox="0 0 12 12"><path d="M1 11.5 A10.5 10.5 0 0 1 11.5 1M3.5 11.5 A8 8 0 0 1 11.5 3.5M6 11.5 A5.5 5.5 0 0 1 11.5 6" stroke="#777" stroke-width="1" fill="none"/><circle cx="10.5" cy="10.5" r="1.2" fill="#333"/></svg>
<svg style="left:933.50px;top:546.00px;" width="13" height="12" viewBox="0 0 13 12"><path d="M0.5 4H3L7 0.5V11.5L3 8H0.5Z" fill="none" stroke="#333" stroke-width="1"/><path d="M9 4L12.5 7.5M12.5 4L9 7.5" stroke="#333" stroke-width="1"/></svg>
<svg style="left:953.50px;top:546.00px;" width="13" height="14" viewBox="0 0 13 14"><path d="M6.5 0V14M1 3.5H12V10H1Z" stroke="#111" stroke-width="1.6" fill="none"/></svg>
<div style="left:988.55px;top:536.87px;height:14px;line-height:14px;font-family:'Liberation Sans',sans-serif;font-size:11px;letter-spacing:-0.183px;color:#222;white-space:pre;">16:27</div>
<div style="left:975.85px;top:552.87px;height:14px;line-height:14px;font-family:'Liberation Sans',sans-serif;font-size:11px;letter-spacing:0.470px;color:#222;white-space:pre;">2025/9/23</div>
<svg style="left:1045.00px;top:543.00px;" width="24" height="22" viewBox="0 0 24 22"><path d="M1 1H14V10H6L3 13V10H1Z" fill="#222"/><path d="M3.5 4h8M3.5 6.5h8" stroke="#eee" stroke-width="0.9"/><circle cx="15.5" cy="14" r="7.2" fill="#e8e8e8" stroke="#555" stroke-width="1.1"/><text x="15.5" y="17.5" font-family="Liberation Sans" font-size="9.5" font-weight="bold" text-anchor="middle" fill="#111">14</text></svg>
</body></html>
